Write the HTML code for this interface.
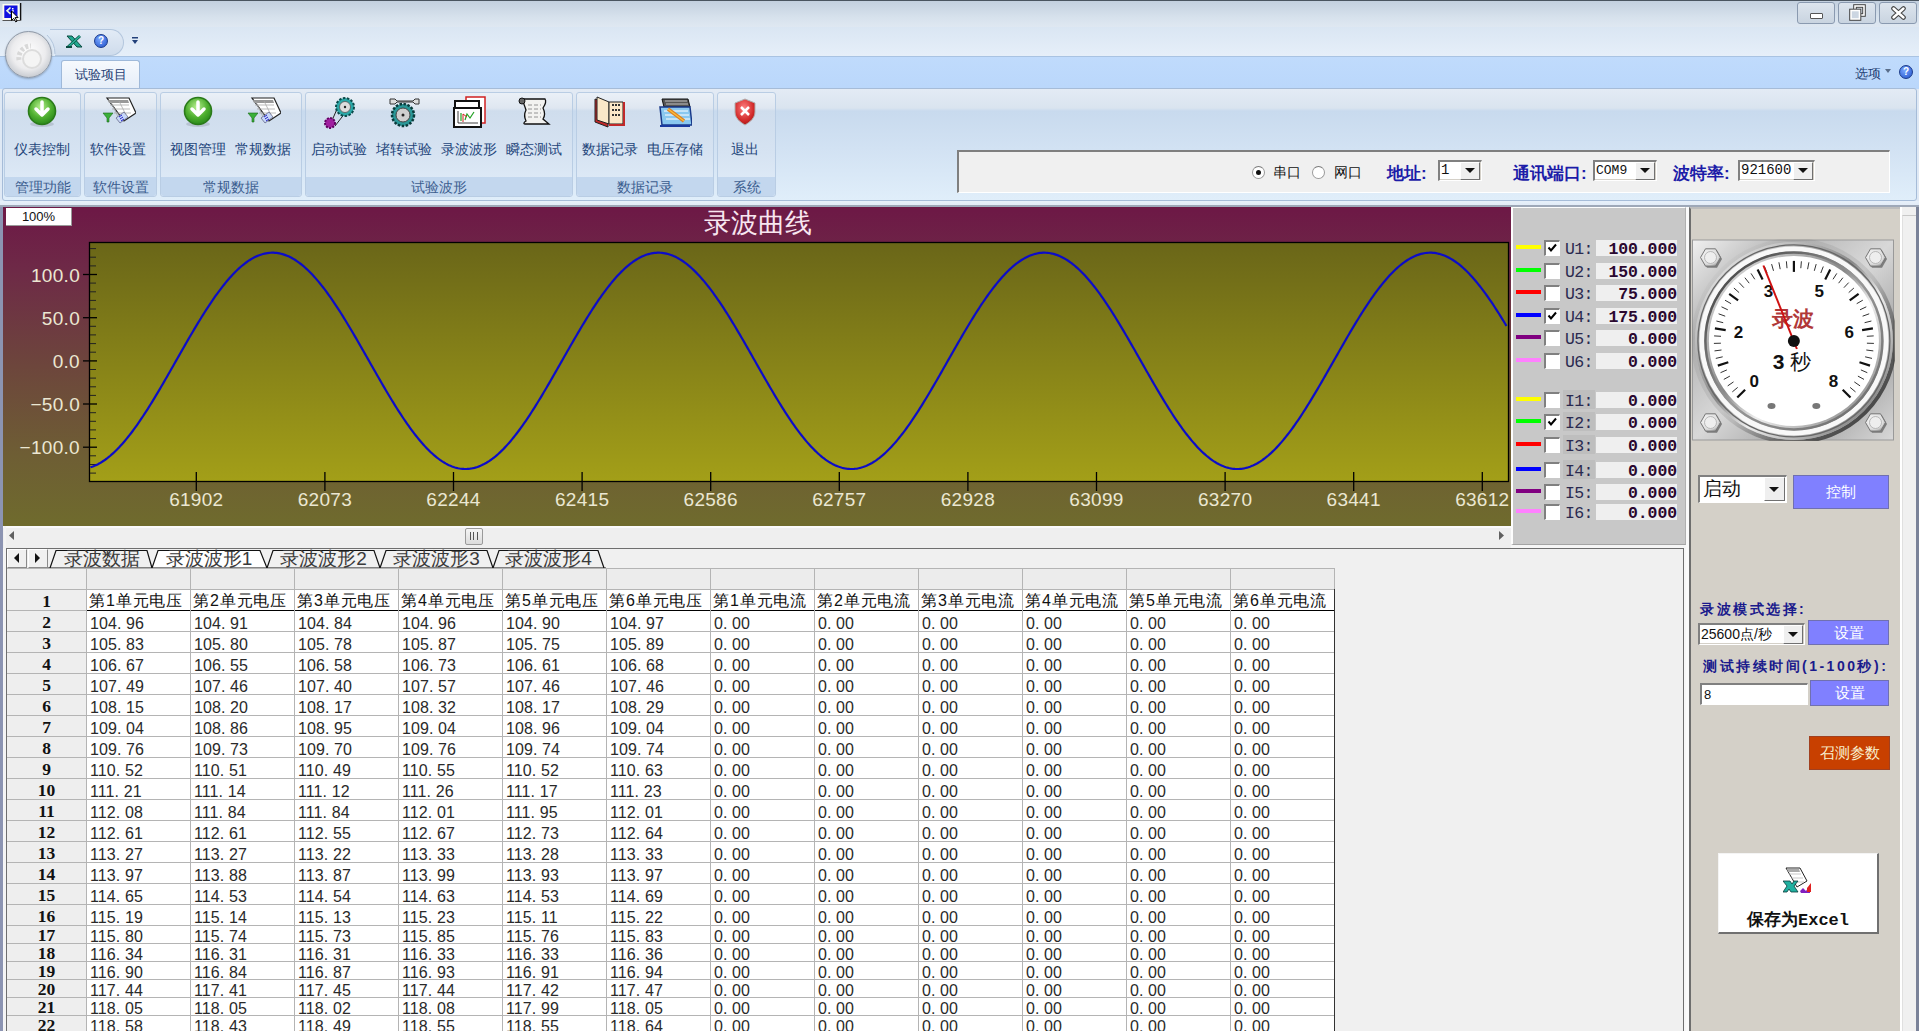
<!DOCTYPE html><html><head><meta charset="utf-8"><style>
*{box-sizing:border-box;margin:0;padding:0}
html,body{width:1919px;height:1031px;overflow:hidden;background:#dfe9f5;font-family:"Liberation Sans",sans-serif}
.ab{position:absolute}
.rl{position:absolute;font-size:14px;font-weight:500;color:#23457a;text-align:center;white-space:nowrap}
.gl{position:absolute;font-size:14px;color:#3b5d8f;text-align:center;white-space:nowrap}
.grp{position:absolute;top:92px;height:105px;border:1px solid #b9cde4;border-radius:3px;background:linear-gradient(#eaf0f7 0px,#dfe7f1 15px,#cfdded 18px,#d6e3f2 60px,#dde9f6 86px);}
.grp .band{position:absolute;left:0;right:0;bottom:0;height:19px;background:#c3d7ee;border-radius:0 0 3px 3px}
.cell{position:absolute;white-space:nowrap}
</style></head><body>

<div class="ab" style="left:0;top:0;width:1919px;height:27px;background:linear-gradient(#c3d0df,#d6e1ec 60%,#dfe8f2);border-top:1px solid #4a5560"></div>
<svg class="ab" style="left:0;top:0" width="26" height="26"><rect x="2.5" y="4" width="16.5" height="16.5" fill="#fbfbf0"/><rect x="4.3" y="5.5" width="13.2" height="12.5" fill="#1010e0"/><rect x="20" y="3" width="1.3" height="17.5" fill="#111"/><rect x="2.5" y="20" width="18" height="1" fill="#555"/><path d="M10.5 7.5L7 10.8l3.5 3" stroke="#e8f8e0" stroke-width="1.6" fill="none"/><rect x="12" y="8" width="1.5" height="1.5" fill="#fff"/><rect x="12" y="10.3" width="2" height="1.2" fill="#fff"/><path d="M11.5 11v9.5l2.2-2.2 2 3.6 1.4-.8-2-3.5h3z" fill="#fff" stroke="#000" stroke-width="1"/></svg>
<div class="ab" style="left:1797px;top:2px;width:38px;height:22px;border:1px solid #8a9ab0;border-radius:3px;background:linear-gradient(#dde5ee,#c9d4e0)"></div>
<div class="ab" style="left:1838px;top:2px;width:38px;height:22px;border:1px solid #8a9ab0;border-radius:3px;background:linear-gradient(#dde5ee,#c9d4e0)"></div>
<div class="ab" style="left:1879px;top:2px;width:38px;height:22px;border:1px solid #8a9ab0;border-radius:3px;background:linear-gradient(#dde5ee,#c9d4e0)"></div>
<div class="ab" style="left:1810px;top:13px;width:13px;height:6px;background:#fff;border:1px solid #555;border-radius:1px"></div>
<svg class="ab" style="left:1849px;top:4px" width="17" height="17"><rect x="6" y="2" width="9" height="9" fill="none" stroke="#444" stroke-width="3.6"/><rect x="6" y="2" width="9" height="9" fill="none" stroke="#fff" stroke-width="1.6"/><rect x="2" y="6.5" width="8.5" height="8.5" fill="#444" stroke="#444" stroke-width="3.6"/><rect x="2" y="6.5" width="8.5" height="8.5" fill="#ccd6e2" stroke="#fff" stroke-width="1.6"/></svg>
<svg class="ab" style="left:1891px;top:6px" width="15" height="14"><path d="M2.5 2.5L12.5 11.5M12.5 2.5L2.5 11.5" stroke="#444" stroke-width="4.6" stroke-linecap="round"/><path d="M2.5 2.5L12.5 11.5M12.5 2.5L2.5 11.5" stroke="#fff" stroke-width="2.4" stroke-linecap="round"/></svg>
<div class="ab" style="left:0;top:27px;width:1919px;height:29px;background:linear-gradient(#dae6f3,#e6eff9)"></div>
<div class="ab" style="left:50px;top:29px;width:74px;height:27px;border:1px solid #b3c6dd;border-left:none;border-radius:0 14px 14px 0;background:linear-gradient(#e2ebf6,#cfdcec)"></div>
<svg class="ab" style="left:0;top:27px" width="80" height="29"><defs><linearGradient id="qb" x1="0" y1="0" x2="0" y2="1"><stop offset="0" stop-color="#dae6f3"/><stop offset="1" stop-color="#e6eff9"/></linearGradient></defs><circle cx="28.5" cy="27" r="26.5" fill="url(#qb)"/><rect x="0" y="0" width="28" height="29" fill="url(#qb)"/><path d="M47 8A26.5 26.5 0 0 1 55 27" stroke="#b3c6dd" fill="none"/></svg>
<svg class="ab" style="left:64px;top:33px" width="20" height="17"><path d="M3 3h5l10 11h-5z" fill="#22a890" stroke="#0a4a40" stroke-width="1"/><path d="M16 3L4 14" stroke="#0a5a4a" stroke-width="3"/><path d="M16 3L4 14" stroke="#30b8a0" stroke-width="1.2"/><path d="M2 14h6" stroke="#0a4a40" stroke-width="2"/></svg>
<div class="ab" style="left:94px;top:34px;width:14px;height:14px;border-radius:50%;background:radial-gradient(circle at 40% 35%,#7aa8ff,#1f4fc8);border:1px solid #1a3a8a;color:#fff;font:bold 10px/12px 'Liberation Sans';text-align:center">?</div>
<svg class="ab" style="left:131px;top:36px" width="8" height="10"><rect x="1" y="1" width="6" height="1.5" fill="#22407a"/><path d="M1 4h6l-3 4z" fill="#22407a"/></svg>
<div class="ab" style="left:0;top:56px;width:1919px;height:33px;background:linear-gradient(#c0dbfc,#bad7fb)"></div>
<div class="ab" style="left:0;top:56px;width:1919px;height:1px;background:#a9c3e2"></div>
<div class="ab" style="left:61px;top:60px;width:79px;height:30px;border:1px solid #9fb9d9;border-bottom:none;border-radius:3px 3px 0 0;background:linear-gradient(#f6f9fd,#e4edf8)"></div>
<div class="ab" style="left:61px;top:66px;width:79px;text-align:center;font-size:13px;font-weight:500;color:#1f3f74">试验项目</div>
<div class="ab" style="left:5px;top:31px;width:47px;height:47px;border-radius:50%;background:radial-gradient(circle at 50% 45%,#ffffff,#ececee 50%,#c4c8ce 78%,#a4a8b0 90%,#cfd2d8 100%);border:1px solid #8e98a6;box-shadow:0 1px 2px rgba(0,0,0,.25)"></div>
<svg class="ab" style="left:13px;top:40px" width="30" height="30"><circle cx="19" cy="19" r="9" fill="#f4f4f4" stroke="#dcdcdc" stroke-width="2"/><path d="M6 20a12 12 0 0 1 12-14" stroke="#d8d8d8" stroke-width="5" fill="none" stroke-dasharray="3 2"/></svg>
<div class="ab" style="left:1855px;top:65px;font-size:13px;font-weight:500;color:#1f3f74">选项</div>
<svg class="ab" style="left:1885px;top:69px" width="6" height="4"><path d="M0 0h6l-3 4z" fill="#5a6e8a"/></svg>
<div class="ab" style="left:1899px;top:65px;width:14px;height:14px;border-radius:50%;background:radial-gradient(circle at 40% 35%,#7aa8ff,#1f4fc8);border:1px solid #1a3a8a;color:#fff;font:bold 10px/12px 'Liberation Sans';text-align:center">?</div>
<div class="ab" style="left:2px;top:88px;width:1915px;height:113px;border:1px solid #a6bcd8;border-radius:3px;background:linear-gradient(#e3ebf5 0px,#dae4ef 19px,#c8daee 22px,#d2e2f3 60px,#e0eefa 111px)"></div>
<div class="grp" style="left:4px;width:77px"><div class="band"></div><div class="gl" style="left:0;right:0;bottom:-1px">管理功能</div></div>
<div class="grp" style="left:84px;width:73px"><div class="band"></div><div class="gl" style="left:0;right:0;bottom:-1px">软件设置</div></div>
<div class="grp" style="left:160px;width:142px"><div class="band"></div><div class="gl" style="left:0;right:0;bottom:-1px">常规数据</div></div>
<div class="grp" style="left:305px;width:268px"><div class="band"></div><div class="gl" style="left:0;right:0;bottom:-1px">试验波形</div></div>
<div class="grp" style="left:576px;width:138px"><div class="band"></div><div class="gl" style="left:0;right:0;bottom:-1px">数据记录</div></div>
<div class="grp" style="left:717px;width:59px"><div class="band"></div><div class="gl" style="left:0;right:0;bottom:-1px">系统</div></div>
<svg width="0" height="0" style="position:absolute"><defs><radialGradient id="gg" cx="45%" cy="35%" r="65%"><stop offset="0" stop-color="#b8f090"/><stop offset=".6" stop-color="#50b030"/><stop offset="1" stop-color="#2a8a1a"/></radialGradient><radialGradient id="rg" cx="45%" cy="35%" r="70%"><stop offset="0" stop-color="#ff8080"/><stop offset=".7" stop-color="#d02828"/><stop offset="1" stop-color="#a01818"/></radialGradient></defs></svg>
<svg class="ab" style="left:26px;top:96px" width="32" height="32"><ellipse cx="16" cy="28" rx="12" ry="3" fill="rgba(0,0,0,.12)"/><circle cx="16" cy="15" r="13.5" fill="url(#gg)" stroke="#2a7a1a" stroke-width="1.6"/><path d="M16 6v13M10 13l6 6 6-6" stroke="#fff" stroke-width="3.5" fill="none" stroke-linecap="round" stroke-linejoin="round"/></svg>
<div class="rl" style="left:2px;width:80px;top:141px">仪表控制</div>
<svg class="ab" style="left:102px;top:96px" width="34" height="32"><path d="M5 2h22l7 15-12 8z" fill="#fff" stroke="#222" stroke-width="1.2"/><path d="M6 4h20l1 3H7z" fill="#999"/><path d="M8 9h19M10 13h18M12 17h17M9 6l8 17M17 5l7 14" stroke="#aaa" stroke-width="0.8"/><path d="M14 22l8-6 4 5-8 6z" fill="#c8d8f8" stroke="#446" stroke-width="0.6"/><path d="M17 21l3-2M18 23l3-2M19 25l3-2" stroke="#22c" stroke-width="1"/><path d="M1 17h10l-4 5v4h-2v-4z" fill="#3ab03a" stroke="#1a6a1a" stroke-width="0.6"/></svg>
<div class="rl" style="left:78px;width:80px;top:141px">软件设置</div>
<svg class="ab" style="left:182px;top:96px" width="32" height="32"><ellipse cx="16" cy="28" rx="12" ry="3" fill="rgba(0,0,0,.12)"/><circle cx="16" cy="15" r="13.5" fill="url(#gg)" stroke="#2a7a1a" stroke-width="1.6"/><path d="M16 6v13M10 13l6 6 6-6" stroke="#fff" stroke-width="3.5" fill="none" stroke-linecap="round" stroke-linejoin="round"/></svg>
<div class="rl" style="left:158px;width:80px;top:141px">视图管理</div>
<svg class="ab" style="left:247px;top:96px" width="34" height="32"><path d="M5 2h22l7 15-12 8z" fill="#fff" stroke="#222" stroke-width="1.2"/><path d="M6 4h20l1 3H7z" fill="#999"/><path d="M8 9h19M10 13h18M12 17h17M9 6l8 17M17 5l7 14" stroke="#aaa" stroke-width="0.8"/><path d="M14 22l8-6 4 5-8 6z" fill="#c8d8f8" stroke="#446" stroke-width="0.6"/><path d="M17 21l3-2M18 23l3-2M19 25l3-2" stroke="#22c" stroke-width="1"/><path d="M1 17h10l-4 5v4h-2v-4z" fill="#3ab03a" stroke="#1a6a1a" stroke-width="0.6"/></svg>
<div class="rl" style="left:223px;width:80px;top:141px">常规数据</div>
<svg class="ab" style="left:322px;top:96px" width="34" height="34"><path d="M8 29L19 4M13 30l14-18" stroke="#222" stroke-width="1"/><circle cx="23" cy="11" r="9" fill="#2aa8a8" stroke="#0a4a4a" stroke-width="2" stroke-dasharray="2.5 1.5"/><circle cx="23" cy="11" r="5.5" fill="#ddd" stroke="#555" stroke-width="0.8"/><circle cx="23" cy="11" r="1.2" fill="#222"/><circle cx="8" cy="27" r="5" fill="#a020a0" stroke="#600060" stroke-width="2" stroke-dasharray="2 1.3"/></svg>
<div class="rl" style="left:299px;width:80px;top:141px">启动试验</div>
<svg class="ab" style="left:387px;top:96px" width="34" height="34"><path d="M3 3h5l2 2h16l2-2h4v5h-4l-2-2H10l-2 2H3z" fill="#ddd" stroke="#333" stroke-width="1"/><circle cx="16" cy="19" r="11" fill="#2a9898" stroke="#0a3a3a" stroke-width="2.5" stroke-dasharray="2.5 1.5"/><circle cx="16" cy="19" r="7" fill="#cfcfcf" stroke="#444" stroke-width="1"/><circle cx="16" cy="19" r="1.5" fill="#222"/></svg>
<div class="rl" style="left:364px;width:80px;top:141px">堵转试验</div>
<svg class="ab" style="left:453px;top:96px" width="34" height="32"><rect x="13" y="1" width="19" height="26" fill="#fff" stroke="#d02020" stroke-width="1.5"/><rect x="2" y="5" width="24" height="10" fill="#fff" stroke="#111" stroke-width="2"/><rect x="1" y="12" width="27" height="19" fill="#fff" stroke="#111" stroke-width="2"/><path d="M5 27h20M5 15v12" stroke="#111" stroke-width="0.8"/><path d="M8 25v-8M12 24l2-6 3 4 4-6" stroke="#22a022" stroke-width="1.2" fill="none"/><path d="M10 26v-8l4 3" stroke="#d02020" stroke-width="1" fill="none"/></svg>
<div class="rl" style="left:429px;width:80px;top:141px">录波波形</div>
<svg class="ab" style="left:517px;top:96px" width="34" height="32"><path d="M6 3h22c2 3 0 6-2 9 2 4 2 8 0 11l6 5H8c-2 0-1-2 1-3-2-4-2-7 0-11-1-3-2-6-3-8z" fill="#f2f2f0" stroke="#111" stroke-width="1.3"/><circle cx="5" cy="5" r="3" fill="#666" stroke="#111" stroke-width="1"/><path d="M11 9h13M11 13h13M11 17h13M11 21h13" stroke="#888" stroke-width="0.9" stroke-dasharray="4 2"/></svg>
<div class="rl" style="left:494px;width:80px;top:141px">瞬态测试</div>
<svg class="ab" style="left:593px;top:95px" width="34" height="34"><path d="M2 4l13 4v24L2 27z" fill="#c02828" stroke="#222" stroke-width="1"/><path d="M4 2l12 5v22L4 25z" fill="#fbe8c8" stroke="#222" stroke-width="1"/><path d="M16 7h14v22H16z" fill="#fbe8c8" stroke="#222" stroke-width="1"/><path d="M30 7h2v24H16v-2h14z" fill="#c02828"/><path d="M19 10h8M19 15h8M19 20h8" stroke="#333" stroke-width="2" stroke-dasharray="2 1"/></svg>
<div class="rl" style="left:570px;width:80px;top:141px">数据记录</div>
<svg class="ab" style="left:658px;top:95px" width="34" height="34"><path d="M4 4h26l2 8H6z" fill="#555" stroke="#111" stroke-width="1"/><path d="M7 6h22M8 9h22" stroke="#ddd" stroke-width="0.8"/><path d="M2 12h30l2 18H4z" fill="#8ac8f0" stroke="#1a3a8a" stroke-width="1.5"/><path d="M6 16h24M7 20h24M8 24h24" stroke="#fff" stroke-width="1"/><path d="M10 14l16 12" stroke="#e08020" stroke-width="3.5"/><path d="M10 14l16 12" stroke="#f8c040" stroke-width="1.2"/><path d="M2 31h30" stroke="#1a3aa0" stroke-width="2"/></svg>
<div class="rl" style="left:635px;width:80px;top:141px">电压存储</div>
<svg class="ab" style="left:733px;top:98px" width="24" height="28"><path d="M12 1l10 4v9c0 6-5 10-10 13C7 24 2 20 2 14V5z" fill="url(#rg)" stroke="#b0b0b0" stroke-width="1"/><path d="M8 9l8 8M16 9l-8 8" stroke="#fff" stroke-width="2.5"/></svg>
<div class="rl" style="left:705px;width:80px;top:141px">退出</div>
<div class="ab" style="left:957px;top:150px;width:933px;height:43px;background:#f0f0f0;border-top:2px solid #7f7f7f;border-left:2px solid #7f7f7f;border-bottom:1px solid #fff;border-right:1px solid #fff"></div>
<div class="ab" style="left:1252px;top:166px;width:13px;height:13px;border-radius:50%;background:#fff;border:1px solid #9a9a9a;border-top-color:#7a7a7a"></div><div class="ab" style="left:1256px;top:170px;width:5px;height:5px;border-radius:50%;background:#111"></div>
<div class="ab" style="left:1273px;top:164px;font-size:14px;color:#111">串口</div>
<div class="ab" style="left:1312px;top:166px;width:13px;height:13px;border-radius:50%;background:#fff;border:1px solid #9a9a9a;border-top-color:#7a7a7a"></div>
<div class="ab" style="left:1334px;top:164px;font-size:14px;color:#111">网口</div>
<div class="ab" style="left:1387px;top:162px;font-size:17px;font-weight:bold;color:#1c1ca8;white-space:nowrap">地址:</div>
<div class="ab" style="left:1438px;top:160px;width:44px;height:21px;background:#fff;border-top:2px solid #808080;border-left:2px solid #808080;border-bottom:1px solid #fff;border-right:1px solid #fff;box-shadow:inset -1px -1px 0 #d4d0c8"></div><div class="ab" style="left:1441px;top:160px;height:21px;line-height:21px;font-size:14px;font-family:'Liberation Mono',monospace;color:#111;white-space:nowrap">1</div><div class="ab" style="left:1460px;top:162px;width:20px;height:18px;background:#efefef;border-right:1px solid #707070;border-bottom:1px solid #707070;border-top:1px solid #fff;border-left:1px solid #fff"></div><svg class="ab" style="left:1465px;top:168px" width="10" height="6"><path d="M0 0h10l-5 5z" fill="#111"/></svg>
<div class="ab" style="left:1513px;top:162px;font-size:17px;font-weight:bold;color:#1c1ca8;white-space:nowrap">通讯端口:</div>
<div class="ab" style="left:1593px;top:160px;width:64px;height:21px;background:#fff;border-top:2px solid #808080;border-left:2px solid #808080;border-bottom:1px solid #fff;border-right:1px solid #fff;box-shadow:inset -1px -1px 0 #d4d0c8"></div><div class="ab" style="left:1596px;top:160px;height:21px;line-height:21px;font-size:13px;font-family:'Liberation Mono',monospace;color:#111;white-space:nowrap">COM9</div><div class="ab" style="left:1635px;top:162px;width:20px;height:18px;background:#efefef;border-right:1px solid #707070;border-bottom:1px solid #707070;border-top:1px solid #fff;border-left:1px solid #fff"></div><svg class="ab" style="left:1640px;top:168px" width="10" height="6"><path d="M0 0h10l-5 5z" fill="#111"/></svg>
<div class="ab" style="left:1673px;top:162px;font-size:17px;font-weight:bold;color:#1c1ca8;white-space:nowrap">波特率:</div>
<div class="ab" style="left:1738px;top:160px;width:77px;height:21px;background:#fff;border-top:2px solid #808080;border-left:2px solid #808080;border-bottom:1px solid #fff;border-right:1px solid #fff;box-shadow:inset -1px -1px 0 #d4d0c8"></div><div class="ab" style="left:1741px;top:160px;height:21px;line-height:21px;font-size:14px;font-family:'Liberation Mono',monospace;color:#111;white-space:nowrap">921600</div><div class="ab" style="left:1793px;top:162px;width:20px;height:18px;background:#efefef;border-right:1px solid #707070;border-bottom:1px solid #707070;border-top:1px solid #fff;border-left:1px solid #fff"></div><svg class="ab" style="left:1798px;top:168px" width="10" height="6"><path d="M0 0h10l-5 5z" fill="#111"/></svg>
<div class="ab" style="left:0;top:201px;width:1919px;height:6px;background:linear-gradient(#e7f0fa,#dfe9f5)"></div>
<div class="ab" style="left:0;top:205px;width:1919px;height:2px;background:#9ea8b8"></div>
<div class="ab" style="left:0;top:207px;width:1919px;height:824px;background:#f6f6f6"></div>
<div class="ab" style="left:0;top:207px;width:3px;height:824px;background:#8c94b2"></div>
<div class="ab" style="left:3px;top:207px;width:1508px;height:319px;background:linear-gradient(#6d1846 0%,#6e2a47 20%,#6d463c 50%,#6e5e34 78%,#6f6b2d 100%)"></div>
<div class="ab" style="left:6px;top:208px;width:66px;height:18px;background:#fff;border-right:1px solid #999;border-bottom:1px solid #999;font-size:13px;line-height:18px;text-align:center;color:#111;font-family:'Liberation Sans',sans-serif">100%</div>
<div class="ab" style="left:658px;top:205px;width:200px;text-align:center;font-size:26.5px;color:#f8e6f0">录波曲线</div>
<svg class="ab" style="left:0;top:0" width="1919" height="1031"><defs><linearGradient id="pg" x1="0" y1="0" x2="0" y2="1"><stop offset="0" stop-color="#6a6618"/><stop offset="1" stop-color="#a39f18"/></linearGradient></defs><rect x="89.5" y="242.5" width="1419.0" height="239.0" fill="url(#pg)" stroke="#000" stroke-width="1.3"/><line x1="83" y1="274.5" x2="97" y2="274.5" stroke="#000" stroke-width="1.3"/><text x="80" y="281.5" text-anchor="end" font-family="Liberation Sans" font-size="19" letter-spacing="0.3" fill="#ebe7d2">100.0</text><line x1="83" y1="317.7" x2="97" y2="317.7" stroke="#000" stroke-width="1.3"/><text x="80" y="324.7" text-anchor="end" font-family="Liberation Sans" font-size="19" letter-spacing="0.3" fill="#ebe7d2">50.0</text><line x1="83" y1="360.9" x2="97" y2="360.9" stroke="#000" stroke-width="1.3"/><text x="80" y="367.9" text-anchor="end" font-family="Liberation Sans" font-size="19" letter-spacing="0.3" fill="#ebe7d2">0.0</text><line x1="83" y1="404.0" x2="97" y2="404.0" stroke="#000" stroke-width="1.3"/><text x="80" y="411.0" text-anchor="end" font-family="Liberation Sans" font-size="19" letter-spacing="0.3" fill="#ebe7d2">&#8722;50.0</text><line x1="83" y1="447.2" x2="97" y2="447.2" stroke="#000" stroke-width="1.3"/><text x="80" y="454.2" text-anchor="end" font-family="Liberation Sans" font-size="19" letter-spacing="0.3" fill="#ebe7d2">&#8722;100.0</text><line x1="90" y1="248.6" x2="96" y2="248.6" stroke="#222" stroke-width="1"/><line x1="90" y1="257.2" x2="96" y2="257.2" stroke="#222" stroke-width="1"/><line x1="90" y1="265.9" x2="96" y2="265.9" stroke="#222" stroke-width="1"/><line x1="90" y1="283.1" x2="96" y2="283.1" stroke="#222" stroke-width="1"/><line x1="90" y1="291.8" x2="96" y2="291.8" stroke="#222" stroke-width="1"/><line x1="90" y1="300.4" x2="96" y2="300.4" stroke="#222" stroke-width="1"/><line x1="90" y1="309.0" x2="96" y2="309.0" stroke="#222" stroke-width="1"/><line x1="90" y1="326.3" x2="96" y2="326.3" stroke="#222" stroke-width="1"/><line x1="90" y1="334.9" x2="96" y2="334.9" stroke="#222" stroke-width="1"/><line x1="90" y1="343.6" x2="96" y2="343.6" stroke="#222" stroke-width="1"/><line x1="90" y1="352.2" x2="96" y2="352.2" stroke="#222" stroke-width="1"/><line x1="90" y1="369.5" x2="96" y2="369.5" stroke="#222" stroke-width="1"/><line x1="90" y1="378.1" x2="96" y2="378.1" stroke="#222" stroke-width="1"/><line x1="90" y1="386.8" x2="96" y2="386.8" stroke="#222" stroke-width="1"/><line x1="90" y1="395.4" x2="96" y2="395.4" stroke="#222" stroke-width="1"/><line x1="90" y1="412.7" x2="96" y2="412.7" stroke="#222" stroke-width="1"/><line x1="90" y1="421.3" x2="96" y2="421.3" stroke="#222" stroke-width="1"/><line x1="90" y1="429.9" x2="96" y2="429.9" stroke="#222" stroke-width="1"/><line x1="90" y1="438.6" x2="96" y2="438.6" stroke="#222" stroke-width="1"/><line x1="90" y1="455.8" x2="96" y2="455.8" stroke="#222" stroke-width="1"/><line x1="90" y1="464.5" x2="96" y2="464.5" stroke="#222" stroke-width="1"/><line x1="90" y1="473.1" x2="96" y2="473.1" stroke="#222" stroke-width="1"/><line x1="196.3" y1="472" x2="196.3" y2="491" stroke="#000" stroke-width="1.3"/><text x="196.3" y="506" text-anchor="middle" font-family="Liberation Sans" font-size="19" letter-spacing="0.3" fill="#ebe7d2">61902</text><line x1="324.9" y1="472" x2="324.9" y2="491" stroke="#000" stroke-width="1.3"/><text x="324.9" y="506" text-anchor="middle" font-family="Liberation Sans" font-size="19" letter-spacing="0.3" fill="#ebe7d2">62073</text><line x1="453.5" y1="472" x2="453.5" y2="491" stroke="#000" stroke-width="1.3"/><text x="453.5" y="506" text-anchor="middle" font-family="Liberation Sans" font-size="19" letter-spacing="0.3" fill="#ebe7d2">62244</text><line x1="582.1" y1="472" x2="582.1" y2="491" stroke="#000" stroke-width="1.3"/><text x="582.1" y="506" text-anchor="middle" font-family="Liberation Sans" font-size="19" letter-spacing="0.3" fill="#ebe7d2">62415</text><line x1="710.7" y1="472" x2="710.7" y2="491" stroke="#000" stroke-width="1.3"/><text x="710.7" y="506" text-anchor="middle" font-family="Liberation Sans" font-size="19" letter-spacing="0.3" fill="#ebe7d2">62586</text><line x1="839.3" y1="472" x2="839.3" y2="491" stroke="#000" stroke-width="1.3"/><text x="839.3" y="506" text-anchor="middle" font-family="Liberation Sans" font-size="19" letter-spacing="0.3" fill="#ebe7d2">62757</text><line x1="967.9" y1="472" x2="967.9" y2="491" stroke="#000" stroke-width="1.3"/><text x="967.9" y="506" text-anchor="middle" font-family="Liberation Sans" font-size="19" letter-spacing="0.3" fill="#ebe7d2">62928</text><line x1="1096.5" y1="472" x2="1096.5" y2="491" stroke="#000" stroke-width="1.3"/><text x="1096.5" y="506" text-anchor="middle" font-family="Liberation Sans" font-size="19" letter-spacing="0.3" fill="#ebe7d2">63099</text><line x1="1225.1" y1="472" x2="1225.1" y2="491" stroke="#000" stroke-width="1.3"/><text x="1225.1" y="506" text-anchor="middle" font-family="Liberation Sans" font-size="19" letter-spacing="0.3" fill="#ebe7d2">63270</text><line x1="1353.7" y1="472" x2="1353.7" y2="491" stroke="#000" stroke-width="1.3"/><text x="1353.7" y="506" text-anchor="middle" font-family="Liberation Sans" font-size="19" letter-spacing="0.3" fill="#ebe7d2">63441</text><line x1="1482.3" y1="472" x2="1482.3" y2="491" stroke="#000" stroke-width="1.3"/><text x="1482.3" y="506" text-anchor="middle" font-family="Liberation Sans" font-size="19" letter-spacing="0.3" fill="#ebe7d2">63612</text><polyline points="90.5,467.29 92.0,466.79 93.5,466.22 95.0,465.60 96.5,464.91 98.0,464.16 99.5,463.34 101.0,462.47 102.5,461.54 104.0,460.54 105.5,459.49 107.0,458.38 108.5,457.21 110.0,455.98 111.5,454.69 113.0,453.35 114.5,451.96 116.0,450.51 117.5,449.00 119.0,447.45 120.5,445.84 122.0,444.18 123.5,442.47 125.0,440.71 126.5,438.91 128.0,437.06 129.5,435.16 131.0,433.22 132.5,431.24 134.0,429.21 135.5,427.14 137.0,425.04 138.5,422.89 140.0,420.71 141.5,418.49 143.0,416.24 144.5,413.96 146.0,411.64 147.5,409.29 149.0,406.92 150.5,404.51 152.0,402.08 153.5,399.63 155.0,397.15 156.5,394.66 158.0,392.14 159.5,389.60 161.0,387.04 162.5,384.47 164.0,381.89 165.5,379.29 167.0,376.68 168.5,374.07 170.0,371.44 171.5,368.81 173.0,366.17 174.5,363.54 176.0,360.89 177.5,358.25 179.0,355.61 180.5,352.98 182.0,350.35 183.5,347.72 185.0,345.10 186.5,342.49 188.0,339.90 189.5,337.31 191.0,334.74 192.5,332.19 194.0,329.65 195.5,327.13 197.0,324.63 198.5,322.15 200.0,319.70 201.5,317.27 203.0,314.86 204.5,312.49 206.0,310.14 207.5,307.82 209.0,305.53 210.5,303.28 212.0,301.06 213.5,298.88 215.0,296.73 216.5,294.63 218.0,292.56 219.5,290.53 221.0,288.54 222.5,286.60 224.0,284.70 225.5,282.85 227.0,281.04 228.5,279.29 230.0,277.58 231.5,275.92 233.0,274.31 234.5,272.75 236.0,271.24 237.5,269.79 239.0,268.39 240.5,267.05 242.0,265.76 243.5,264.53 245.0,263.36 246.5,262.25 248.0,261.19 249.5,260.20 251.0,259.26 252.5,258.38 254.0,257.57 255.5,256.82 257.0,256.13 258.5,255.50 260.0,254.93 261.5,254.43 263.0,253.99 264.5,253.62 266.0,253.31 267.5,253.06 269.0,252.88 270.5,252.76 272.0,252.70 273.5,252.71 275.0,252.79 276.5,252.93 278.0,253.13 279.5,253.40 281.0,253.73 282.5,254.13 284.0,254.59 285.5,255.11 287.0,255.70 288.5,256.35 290.0,257.06 291.5,257.83 293.0,258.67 294.5,259.56 296.0,260.52 297.5,261.54 299.0,262.61 300.5,263.75 302.0,264.94 303.5,266.19 305.0,267.49 306.5,268.85 308.0,270.27 309.5,271.74 311.0,273.26 312.5,274.84 314.0,276.46 315.5,278.14 317.0,279.87 318.5,281.64 320.0,283.46 321.5,285.33 323.0,287.24 324.5,289.20 326.0,291.20 327.5,293.24 329.0,295.32 330.5,297.44 332.0,299.60 333.5,301.80 335.0,304.03 336.5,306.29 338.0,308.59 339.5,310.92 341.0,313.27 342.5,315.66 344.0,318.07 345.5,320.51 347.0,322.97 348.5,325.46 350.0,327.97 351.5,330.49 353.0,333.04 354.5,335.60 356.0,338.17 357.5,340.76 359.0,343.36 360.5,345.97 362.0,348.59 363.5,351.22 365.0,353.86 366.5,356.49 368.0,359.13 369.5,361.77 371.0,364.42 372.5,367.05 374.0,369.69 375.5,372.32 377.0,374.94 378.5,377.56 380.0,380.16 381.5,382.75 383.0,385.33 384.5,387.90 386.0,390.45 387.5,392.98 389.0,395.49 390.5,397.98 392.0,400.45 393.5,402.90 395.0,405.32 396.5,407.71 398.0,410.08 399.5,412.42 401.0,414.72 402.5,417.00 404.0,419.24 405.5,421.44 407.0,423.61 408.5,425.74 410.0,427.84 411.5,429.89 413.0,431.90 414.5,433.87 416.0,435.80 417.5,437.68 419.0,439.52 420.5,441.31 422.0,443.05 423.5,444.74 425.0,446.38 426.5,447.97 428.0,449.51 429.5,451.00 431.0,452.43 432.5,453.81 434.0,455.13 435.5,456.39 437.0,457.60 438.5,458.75 440.0,459.85 441.5,460.88 443.0,461.86 444.5,462.77 446.0,463.62 447.5,464.41 449.0,465.14 450.5,465.81 452.0,466.42 453.5,466.96 455.0,467.44 456.5,467.85 458.0,468.21 459.5,468.49 461.0,468.72 462.5,468.88 464.0,468.97 465.5,469.00 467.0,468.97 468.5,468.87 470.0,468.70 471.5,468.48 473.0,468.18 474.5,467.83 476.0,467.41 477.5,466.93 479.0,466.38 480.5,465.77 482.0,465.10 483.5,464.36 485.0,463.57 486.5,462.71 488.0,461.79 489.5,460.81 491.0,459.78 492.5,458.68 494.0,457.52 495.5,456.31 497.0,455.04 498.5,453.72 500.0,452.33 501.5,450.90 503.0,449.41 504.5,447.87 506.0,446.27 507.5,444.63 509.0,442.93 510.5,441.19 512.0,439.40 513.5,437.56 515.0,435.67 516.5,433.74 518.0,431.77 519.5,429.75 521.0,427.70 522.5,425.60 524.0,423.47 525.5,421.30 527.0,419.09 528.5,416.84 530.0,414.57 531.5,412.26 533.0,409.92 534.5,407.55 536.0,405.16 537.5,402.73 539.0,400.29 540.5,397.82 542.0,395.32 543.5,392.81 545.0,390.28 546.5,387.73 548.0,385.16 549.5,382.58 551.0,379.99 552.5,377.38 554.0,374.77 555.5,372.14 557.0,369.51 558.5,366.88 560.0,364.24 561.5,361.60 563.0,358.96 564.5,356.32 566.0,353.68 567.5,351.05 569.0,348.42 570.5,345.80 572.0,343.19 573.5,340.59 575.0,338.00 576.5,335.43 578.0,332.87 579.5,330.32 581.0,327.80 582.5,325.29 584.0,322.81 585.5,320.35 587.0,317.91 588.5,315.50 590.0,313.12 591.5,310.76 593.0,308.44 594.5,306.14 596.0,303.88 597.5,301.65 599.0,299.46 600.5,297.30 602.0,295.18 603.5,293.11 605.0,291.07 606.5,289.07 608.0,287.12 609.5,285.21 611.0,283.34 612.5,281.52 614.0,279.75 615.5,278.03 617.0,276.35 618.5,274.73 620.0,273.16 621.5,271.64 623.0,270.17 624.5,268.76 626.0,267.40 627.5,266.10 629.0,264.86 630.5,263.67 632.0,262.54 633.5,261.47 635.0,260.45 636.5,259.50 638.0,258.61 639.5,257.78 641.0,257.01 642.5,256.30 644.0,255.66 645.5,255.08 647.0,254.56 648.5,254.10 650.0,253.71 651.5,253.38 653.0,253.12 654.5,252.92 656.0,252.78 657.5,252.71 659.0,252.71 660.5,252.76 662.0,252.89 663.5,253.07 665.0,253.32 666.5,253.64 668.0,254.02 669.5,254.46 671.0,254.97 672.5,255.54 674.0,256.17 675.5,256.86 677.0,257.62 678.5,258.44 680.0,259.32 681.5,260.26 683.0,261.26 684.5,262.32 686.0,263.44 687.5,264.61 689.0,265.85 690.5,267.14 692.0,268.48 693.5,269.89 695.0,271.34 696.5,272.85 698.0,274.41 699.5,276.03 701.0,277.69 702.5,279.40 704.0,281.16 705.5,282.97 707.0,284.83 708.5,286.73 710.0,288.68 711.5,290.66 713.0,292.69 714.5,294.77 716.0,296.88 717.5,299.02 719.0,301.21 720.5,303.43 722.0,305.69 723.5,307.97 725.0,310.29 726.5,312.64 728.0,315.02 729.5,317.43 731.0,319.86 732.5,322.32 734.0,324.80 735.5,327.30 737.0,329.82 738.5,332.36 740.0,334.91 741.5,337.48 743.0,340.07 744.5,342.67 746.0,345.28 747.5,347.89 749.0,350.52 750.5,353.15 752.0,355.79 753.5,358.43 755.0,361.07 756.5,363.71 758.0,366.35 759.5,368.99 761.0,371.62 762.5,374.24 764.0,376.86 765.5,379.47 767.0,382.06 768.5,384.65 770.0,387.22 771.5,389.77 773.0,392.30 774.5,394.82 776.0,397.32 777.5,399.80 779.0,402.25 780.5,404.67 782.0,407.08 783.5,409.45 785.0,411.80 786.5,414.11 788.0,416.39 789.5,418.64 791.0,420.86 792.5,423.04 794.0,425.18 795.5,427.28 797.0,429.35 798.5,431.37 800.0,433.35 801.5,435.29 803.0,437.18 804.5,439.03 806.0,440.83 807.5,442.59 809.0,444.29 810.5,445.95 812.0,447.55 813.5,449.10 815.0,450.60 816.5,452.05 818.0,453.44 819.5,454.78 821.0,456.06 822.5,457.29 824.0,458.45 825.5,459.56 827.0,460.61 828.5,461.60 830.0,462.53 831.5,463.40 833.0,464.21 834.5,464.96 836.0,465.64 837.5,466.26 839.0,466.82 840.5,467.32 842.0,467.75 843.5,468.12 845.0,468.42 846.5,468.66 848.0,468.84 849.5,468.95 851.0,469.00 852.5,468.98 854.0,468.90 855.5,468.75 857.0,468.54 858.5,468.27 860.0,467.93 861.5,467.53 863.0,467.06 864.5,466.53 866.0,465.94 867.5,465.28 869.0,464.56 870.5,463.79 872.0,462.94 873.5,462.04 875.0,461.08 876.5,460.06 878.0,458.98 879.5,457.84 881.0,456.64 882.5,455.39 884.0,454.07 885.5,452.71 887.0,451.29 888.5,449.81 890.0,448.28 891.5,446.70 893.0,445.07 894.5,443.39 896.0,441.66 897.5,439.88 899.0,438.05 900.5,436.18 902.0,434.26 903.5,432.30 905.0,430.30 906.5,428.25 908.0,426.17 909.5,424.04 911.0,421.88 912.5,419.68 914.0,417.45 915.5,415.18 917.0,412.88 918.5,410.55 920.0,408.19 921.5,405.80 923.0,403.38 924.5,400.94 926.0,398.48 927.5,395.99 929.0,393.48 930.5,390.95 932.0,388.41 933.5,385.85 935.0,383.27 936.5,380.68 938.0,378.08 939.5,375.46 941.0,372.84 942.5,370.21 944.0,367.58 945.5,364.94 947.0,362.30 948.5,359.66 950.0,357.02 951.5,354.38 953.0,351.75 954.5,349.12 956.0,346.50 957.5,343.88 959.0,341.28 960.5,338.69 962.0,336.11 963.5,333.55 965.0,331.00 966.5,328.47 968.0,325.96 969.5,323.47 971.0,321.00 972.5,318.56 974.0,316.14 975.5,313.75 977.0,311.39 978.5,309.05 980.0,306.75 981.5,304.48 983.0,302.24 984.5,300.04 986.0,297.87 987.5,295.75 989.0,293.66 990.5,291.61 992.0,289.60 993.5,287.63 995.0,285.71 996.5,283.83 998.0,282.00 999.5,280.22 1001.0,278.48 1002.5,276.80 1004.0,275.16 1005.5,273.57 1007.0,272.04 1008.5,270.56 1010.0,269.13 1011.5,267.76 1013.0,266.44 1014.5,265.18 1016.0,263.98 1017.5,262.83 1019.0,261.75 1020.5,260.72 1022.0,259.75 1023.5,258.84 1025.0,258.00 1026.5,257.21 1028.0,256.49 1029.5,255.82 1031.0,255.23 1032.5,254.69 1034.0,254.22 1035.5,253.81 1037.0,253.46 1038.5,253.18 1040.0,252.96 1041.5,252.81 1043.0,252.72 1044.5,252.70 1046.0,252.74 1047.5,252.85 1049.0,253.02 1050.5,253.25 1052.0,253.55 1053.5,253.91 1055.0,254.34 1056.5,254.83 1058.0,255.38 1059.5,256.00 1061.0,256.67 1062.5,257.41 1064.0,258.22 1065.5,259.08 1067.0,260.00 1068.5,260.99 1070.0,262.03 1071.5,263.13 1073.0,264.29 1074.5,265.51 1076.0,266.79 1077.5,268.12 1079.0,269.51 1080.5,270.95 1082.0,272.44 1083.5,273.99 1085.0,275.59 1086.5,277.24 1088.0,278.94 1089.5,280.69 1091.0,282.49 1092.5,284.33 1094.0,286.22 1095.5,288.15 1097.0,290.13 1098.5,292.15 1100.0,294.21 1101.5,296.31 1103.0,298.45 1104.5,300.62 1106.0,302.83 1107.5,305.08 1109.0,307.36 1110.5,309.67 1112.0,312.01 1113.5,314.38 1115.0,316.78 1116.5,319.21 1118.0,321.66 1119.5,324.13 1121.0,326.63 1122.5,329.14 1124.0,331.68 1125.5,334.23 1127.0,336.80 1128.5,339.38 1130.0,341.97 1131.5,344.58 1133.0,347.20 1134.5,349.82 1136.0,352.45 1137.5,355.09 1139.0,357.72 1140.5,360.37 1142.0,363.01 1143.5,365.65 1145.0,368.28 1146.5,370.92 1148.0,373.54 1149.5,376.16 1151.0,378.77 1152.5,381.37 1154.0,383.96 1155.5,386.53 1157.0,389.09 1158.5,391.63 1160.0,394.15 1161.5,396.66 1163.0,399.14 1164.5,401.60 1166.0,404.03 1167.5,406.44 1169.0,408.82 1170.5,411.17 1172.0,413.50 1173.5,415.79 1175.0,418.05 1176.5,420.27 1178.0,422.46 1179.5,424.61 1181.0,426.73 1182.5,428.80 1184.0,430.83 1185.5,432.83 1187.0,434.78 1188.5,436.68 1190.0,438.54 1191.5,440.36 1193.0,442.12 1194.5,443.84 1196.0,445.51 1197.5,447.13 1199.0,448.70 1200.5,450.21 1202.0,451.67 1203.5,453.08 1205.0,454.43 1206.5,455.73 1208.0,456.97 1209.5,458.15 1211.0,459.27 1212.5,460.34 1214.0,461.34 1215.5,462.29 1217.0,463.17 1218.5,464.00 1220.0,464.76 1221.5,465.46 1223.0,466.10 1224.5,466.68 1226.0,467.19 1227.5,467.64 1229.0,468.03 1230.5,468.35 1232.0,468.61 1233.5,468.80 1235.0,468.93 1236.5,468.99 1238.0,468.99 1239.5,468.93 1241.0,468.80 1242.5,468.61 1244.0,468.35 1245.5,468.03 1247.0,467.64 1248.5,467.19 1250.0,466.68 1251.5,466.10 1253.0,465.46 1254.5,464.76 1256.0,464.00 1257.5,463.17 1259.0,462.29 1260.5,461.34 1262.0,460.34 1263.5,459.27 1265.0,458.15 1266.5,456.97 1268.0,455.73 1269.5,454.43 1271.0,453.08 1272.5,451.67 1274.0,450.21 1275.5,448.70 1277.0,447.13 1278.5,445.51 1280.0,443.84 1281.5,442.12 1283.0,440.36 1284.5,438.54 1286.0,436.68 1287.5,434.78 1289.0,432.83 1290.5,430.83 1292.0,428.80 1293.5,426.73 1295.0,424.61 1296.5,422.46 1298.0,420.27 1299.5,418.05 1301.0,415.79 1302.5,413.50 1304.0,411.17 1305.5,408.82 1307.0,406.44 1308.5,404.03 1310.0,401.60 1311.5,399.14 1313.0,396.66 1314.5,394.15 1316.0,391.63 1317.5,389.09 1319.0,386.53 1320.5,383.96 1322.0,381.37 1323.5,378.77 1325.0,376.16 1326.5,373.54 1328.0,370.92 1329.5,368.28 1331.0,365.65 1332.5,363.01 1334.0,360.37 1335.5,357.72 1337.0,355.09 1338.5,352.45 1340.0,349.82 1341.5,347.20 1343.0,344.58 1344.5,341.97 1346.0,339.38 1347.5,336.80 1349.0,334.23 1350.5,331.68 1352.0,329.14 1353.5,326.63 1355.0,324.13 1356.5,321.66 1358.0,319.21 1359.5,316.78 1361.0,314.38 1362.5,312.01 1364.0,309.67 1365.5,307.36 1367.0,305.08 1368.5,302.83 1370.0,300.62 1371.5,298.45 1373.0,296.31 1374.5,294.21 1376.0,292.15 1377.5,290.13 1379.0,288.15 1380.5,286.22 1382.0,284.33 1383.5,282.49 1385.0,280.69 1386.5,278.94 1388.0,277.24 1389.5,275.59 1391.0,273.99 1392.5,272.44 1394.0,270.95 1395.5,269.51 1397.0,268.12 1398.5,266.79 1400.0,265.51 1401.5,264.29 1403.0,263.13 1404.5,262.03 1406.0,260.99 1407.5,260.00 1409.0,259.08 1410.5,258.22 1412.0,257.41 1413.5,256.67 1415.0,256.00 1416.5,255.38 1418.0,254.83 1419.5,254.34 1421.0,253.91 1422.5,253.55 1424.0,253.25 1425.5,253.02 1427.0,252.85 1428.5,252.74 1430.0,252.70 1431.5,252.72 1433.0,252.81 1434.5,252.96 1436.0,253.18 1437.5,253.46 1439.0,253.81 1440.5,254.22 1442.0,254.69 1443.5,255.23 1445.0,255.82 1446.5,256.49 1448.0,257.21 1449.5,258.00 1451.0,258.84 1452.5,259.75 1454.0,260.72 1455.5,261.75 1457.0,262.83 1458.5,263.98 1460.0,265.18 1461.5,266.44 1463.0,267.76 1464.5,269.13 1466.0,270.56 1467.5,272.04 1469.0,273.57 1470.5,275.16 1472.0,276.80 1473.5,278.48 1475.0,280.22 1476.5,282.00 1478.0,283.83 1479.5,285.71 1481.0,287.63 1482.5,289.60 1484.0,291.61 1485.5,293.66 1487.0,295.75 1488.5,297.87 1490.0,300.04 1491.5,302.24 1493.0,304.48 1494.5,306.75 1496.0,309.05 1497.5,311.39 1499.0,313.75 1500.5,316.14 1502.0,318.56 1503.5,321.00 1505.0,323.47 1506.5,325.96" fill="none" stroke="#0c0cc8" stroke-width="2.2"/></svg>
<div class="ab" style="left:1511px;top:207px;width:175px;height:338px;background:#c8c8c8;border-left:2px solid #fdfdfd;border-top:1px solid #fdfdfd;border-bottom:1px solid #a4a4a4;border-right:1px solid #b0b0b0"></div>
<div class="ab" style="left:1516px;top:245px;width:25px;height:4px;background:#ffff00"></div>
<div class="ab" style="left:1544px;top:240px;width:16px;height:16px;background:#fff;border-top:2px solid #808080;border-left:2px solid #808080;border-right:1px solid #fff;border-bottom:1px solid #fff"></div>
<svg class="ab" style="left:1547px;top:243px" width="10" height="10"><path d="M1.5 4.5l2.5 3 5-6" stroke="#000" stroke-width="2" fill="none"/></svg>
<div class="ab" style="left:1565px;top:240px;font-family:'Liberation Mono',monospace;font-size:16.5px;color:#2a2a50;white-space:nowrap;letter-spacing:-0.6px">U1:</div>
<div class="ab" style="left:1596px;top:240px;width:81px;height:16px;background:#efefef"></div>
<div class="ab" style="left:1560px;top:240px;width:117px;text-align:right;font-family:'Liberation Mono',monospace;font-weight:bold;font-size:16.5px;color:#2a0830;letter-spacing:-0.1px;white-space:nowrap">100.000</div>
<div class="ab" style="left:1516px;top:268px;width:25px;height:4px;background:#00ff00"></div>
<div class="ab" style="left:1544px;top:263px;width:16px;height:16px;background:#fff;border-top:2px solid #808080;border-left:2px solid #808080;border-right:1px solid #fff;border-bottom:1px solid #fff"></div>
<div class="ab" style="left:1565px;top:263px;font-family:'Liberation Mono',monospace;font-size:16.5px;color:#2a2a50;white-space:nowrap;letter-spacing:-0.6px">U2:</div>
<div class="ab" style="left:1596px;top:263px;width:81px;height:16px;background:#efefef"></div>
<div class="ab" style="left:1560px;top:263px;width:117px;text-align:right;font-family:'Liberation Mono',monospace;font-weight:bold;font-size:16.5px;color:#2a0830;letter-spacing:-0.1px;white-space:nowrap">150.000</div>
<div class="ab" style="left:1516px;top:290px;width:25px;height:4px;background:#ff0000"></div>
<div class="ab" style="left:1544px;top:285px;width:16px;height:16px;background:#fff;border-top:2px solid #808080;border-left:2px solid #808080;border-right:1px solid #fff;border-bottom:1px solid #fff"></div>
<div class="ab" style="left:1565px;top:285px;font-family:'Liberation Mono',monospace;font-size:16.5px;color:#2a2a50;white-space:nowrap;letter-spacing:-0.6px">U3:</div>
<div class="ab" style="left:1596px;top:285px;width:81px;height:16px;background:#efefef"></div>
<div class="ab" style="left:1560px;top:285px;width:117px;text-align:right;font-family:'Liberation Mono',monospace;font-weight:bold;font-size:16.5px;color:#2a0830;letter-spacing:-0.1px;white-space:nowrap">75.000</div>
<div class="ab" style="left:1516px;top:313px;width:25px;height:4px;background:#0000ff"></div>
<div class="ab" style="left:1544px;top:308px;width:16px;height:16px;background:#fff;border-top:2px solid #808080;border-left:2px solid #808080;border-right:1px solid #fff;border-bottom:1px solid #fff"></div>
<svg class="ab" style="left:1547px;top:311px" width="10" height="10"><path d="M1.5 4.5l2.5 3 5-6" stroke="#000" stroke-width="2" fill="none"/></svg>
<div class="ab" style="left:1565px;top:308px;font-family:'Liberation Mono',monospace;font-size:16.5px;color:#2a2a50;white-space:nowrap;letter-spacing:-0.6px">U4:</div>
<div class="ab" style="left:1596px;top:308px;width:81px;height:16px;background:#efefef"></div>
<div class="ab" style="left:1560px;top:308px;width:117px;text-align:right;font-family:'Liberation Mono',monospace;font-weight:bold;font-size:16.5px;color:#2a0830;letter-spacing:-0.1px;white-space:nowrap">175.000</div>
<div class="ab" style="left:1516px;top:335px;width:25px;height:4px;background:#800080"></div>
<div class="ab" style="left:1544px;top:330px;width:16px;height:16px;background:#fff;border-top:2px solid #808080;border-left:2px solid #808080;border-right:1px solid #fff;border-bottom:1px solid #fff"></div>
<div class="ab" style="left:1565px;top:330px;font-family:'Liberation Mono',monospace;font-size:16.5px;color:#2a2a50;white-space:nowrap;letter-spacing:-0.6px">U5:</div>
<div class="ab" style="left:1596px;top:330px;width:81px;height:16px;background:#efefef"></div>
<div class="ab" style="left:1560px;top:330px;width:117px;text-align:right;font-family:'Liberation Mono',monospace;font-weight:bold;font-size:16.5px;color:#2a0830;letter-spacing:-0.1px;white-space:nowrap">0.000</div>
<div class="ab" style="left:1516px;top:358px;width:25px;height:4px;background:#ff80ff"></div>
<div class="ab" style="left:1544px;top:353px;width:16px;height:16px;background:#fff;border-top:2px solid #808080;border-left:2px solid #808080;border-right:1px solid #fff;border-bottom:1px solid #fff"></div>
<div class="ab" style="left:1565px;top:353px;font-family:'Liberation Mono',monospace;font-size:16.5px;color:#2a2a50;white-space:nowrap;letter-spacing:-0.6px">U6:</div>
<div class="ab" style="left:1596px;top:353px;width:81px;height:16px;background:#efefef"></div>
<div class="ab" style="left:1560px;top:353px;width:117px;text-align:right;font-family:'Liberation Mono',monospace;font-weight:bold;font-size:16.5px;color:#2a0830;letter-spacing:-0.1px;white-space:nowrap">0.000</div>
<div class="ab" style="left:1516px;top:397px;width:25px;height:4px;background:#ffff00"></div>
<div class="ab" style="left:1544px;top:392px;width:16px;height:16px;background:#fff;border-top:2px solid #808080;border-left:2px solid #808080;border-right:1px solid #fff;border-bottom:1px solid #fff"></div>
<div class="ab" style="left:1563px;top:390px;width:32px;height:19px;background:#bebebe"></div>
<div class="ab" style="left:1565px;top:392px;font-family:'Liberation Mono',monospace;font-size:16.5px;color:#2a2a50;white-space:nowrap;letter-spacing:-0.6px">I1:</div>
<div class="ab" style="left:1596px;top:392px;width:81px;height:16px;background:#efefef"></div>
<div class="ab" style="left:1560px;top:392px;width:117px;text-align:right;font-family:'Liberation Mono',monospace;font-weight:bold;font-size:16.5px;color:#2a0830;letter-spacing:-0.1px;white-space:nowrap">0.000</div>
<div class="ab" style="left:1516px;top:419px;width:25px;height:4px;background:#00ff00"></div>
<div class="ab" style="left:1544px;top:414px;width:16px;height:16px;background:#fff;border-top:2px solid #808080;border-left:2px solid #808080;border-right:1px solid #fff;border-bottom:1px solid #fff"></div>
<svg class="ab" style="left:1547px;top:417px" width="10" height="10"><path d="M1.5 4.5l2.5 3 5-6" stroke="#000" stroke-width="2" fill="none"/></svg>
<div class="ab" style="left:1563px;top:412px;width:32px;height:19px;background:#bebebe"></div>
<div class="ab" style="left:1565px;top:414px;font-family:'Liberation Mono',monospace;font-size:16.5px;color:#2a2a50;white-space:nowrap;letter-spacing:-0.6px">I2:</div>
<div class="ab" style="left:1596px;top:414px;width:81px;height:16px;background:#efefef"></div>
<div class="ab" style="left:1560px;top:414px;width:117px;text-align:right;font-family:'Liberation Mono',monospace;font-weight:bold;font-size:16.5px;color:#2a0830;letter-spacing:-0.1px;white-space:nowrap">0.000</div>
<div class="ab" style="left:1516px;top:442px;width:25px;height:4px;background:#ff0000"></div>
<div class="ab" style="left:1544px;top:437px;width:16px;height:16px;background:#fff;border-top:2px solid #808080;border-left:2px solid #808080;border-right:1px solid #fff;border-bottom:1px solid #fff"></div>
<div class="ab" style="left:1563px;top:435px;width:32px;height:19px;background:#bebebe"></div>
<div class="ab" style="left:1565px;top:437px;font-family:'Liberation Mono',monospace;font-size:16.5px;color:#2a2a50;white-space:nowrap;letter-spacing:-0.6px">I3:</div>
<div class="ab" style="left:1596px;top:437px;width:81px;height:16px;background:#efefef"></div>
<div class="ab" style="left:1560px;top:437px;width:117px;text-align:right;font-family:'Liberation Mono',monospace;font-weight:bold;font-size:16.5px;color:#2a0830;letter-spacing:-0.1px;white-space:nowrap">0.000</div>
<div class="ab" style="left:1516px;top:467px;width:25px;height:4px;background:#0000ff"></div>
<div class="ab" style="left:1544px;top:462px;width:16px;height:16px;background:#fff;border-top:2px solid #808080;border-left:2px solid #808080;border-right:1px solid #fff;border-bottom:1px solid #fff"></div>
<div class="ab" style="left:1563px;top:460px;width:32px;height:19px;background:#bebebe"></div>
<div class="ab" style="left:1565px;top:462px;font-family:'Liberation Mono',monospace;font-size:16.5px;color:#2a2a50;white-space:nowrap;letter-spacing:-0.6px">I4:</div>
<div class="ab" style="left:1596px;top:462px;width:81px;height:16px;background:#efefef"></div>
<div class="ab" style="left:1560px;top:462px;width:117px;text-align:right;font-family:'Liberation Mono',monospace;font-weight:bold;font-size:16.5px;color:#2a0830;letter-spacing:-0.1px;white-space:nowrap">0.000</div>
<div class="ab" style="left:1516px;top:489px;width:25px;height:4px;background:#800080"></div>
<div class="ab" style="left:1544px;top:484px;width:16px;height:16px;background:#fff;border-top:2px solid #808080;border-left:2px solid #808080;border-right:1px solid #fff;border-bottom:1px solid #fff"></div>
<div class="ab" style="left:1565px;top:484px;font-family:'Liberation Mono',monospace;font-size:16.5px;color:#2a2a50;white-space:nowrap;letter-spacing:-0.6px">I5:</div>
<div class="ab" style="left:1596px;top:484px;width:81px;height:16px;background:#efefef"></div>
<div class="ab" style="left:1560px;top:484px;width:117px;text-align:right;font-family:'Liberation Mono',monospace;font-weight:bold;font-size:16.5px;color:#2a0830;letter-spacing:-0.1px;white-space:nowrap">0.000</div>
<div class="ab" style="left:1516px;top:509px;width:25px;height:4px;background:#ff80ff"></div>
<div class="ab" style="left:1544px;top:504px;width:16px;height:16px;background:#fff;border-top:2px solid #808080;border-left:2px solid #808080;border-right:1px solid #fff;border-bottom:1px solid #fff"></div>
<div class="ab" style="left:1565px;top:504px;font-family:'Liberation Mono',monospace;font-size:16.5px;color:#2a2a50;white-space:nowrap;letter-spacing:-0.6px">I6:</div>
<div class="ab" style="left:1596px;top:504px;width:81px;height:16px;background:#efefef"></div>
<div class="ab" style="left:1560px;top:504px;width:117px;text-align:right;font-family:'Liberation Mono',monospace;font-weight:bold;font-size:16.5px;color:#2a0830;letter-spacing:-0.1px;white-space:nowrap">0.000</div>
<div class="ab" style="left:1686px;top:207px;width:3px;height:824px;background:#fafafa"></div>
<div class="ab" style="left:1689px;top:207px;width:211px;height:824px;background:#d4d0c8;border-left:2px solid #6e6e6e;border-top:2px solid #bdbdbd"></div>
<div class="ab" style="left:1900px;top:207px;width:19px;height:824px;background:#f0f0f0;border-left:2px solid #fff"></div>
<div class="ab" style="left:1902px;top:215px;width:15px;height:816px;border-top:1px solid #c8c8c8;border-left:1px solid #e0e0e0"></div>
<div class="ab" style="left:1916px;top:207px;width:3px;height:824px;background:#7a8298"></div>
<svg class="ab" style="left:1692px;top:239px" width="203" height="202"><defs><linearGradient id="plate" x1="0" y1="0" x2="1" y2="1"><stop offset="0" stop-color="#f0f0f0"/><stop offset=".25" stop-color="#b4b4b4"/><stop offset=".5" stop-color="#d8d8d8"/><stop offset=".75" stop-color="#a4a4a4"/><stop offset="1" stop-color="#d8d8d8"/></linearGradient><linearGradient id="ring" x1="0" y1="0" x2="1" y2="1"><stop offset="0" stop-color="#fff"/><stop offset=".45" stop-color="#888"/><stop offset=".6" stop-color="#eee"/><stop offset="1" stop-color="#555"/></linearGradient><linearGradient id="sh2" x1="0" y1="0" x2="1" y2="1"><stop offset="0" stop-color="#000" stop-opacity="0"/><stop offset=".55" stop-color="#000" stop-opacity="0.1"/><stop offset="1" stop-color="#111" stop-opacity="0.9"/></linearGradient><linearGradient id="shad" x1="0" y1="0" x2="1" y2="1"><stop offset="0" stop-color="#333"/><stop offset=".5" stop-color="#999"/><stop offset="1" stop-color="#666"/></linearGradient><radialGradient id="bolt" cx="40%" cy="40%" r="70%"><stop offset="0" stop-color="#fff"/><stop offset=".7" stop-color="#ddd"/><stop offset="1" stop-color="#888"/></radialGradient></defs><rect x="0.5" y="1" width="201" height="200" fill="url(#plate)" stroke="#999" stroke-width="1"/><circle cx="101.90000000000009" cy="101.89999999999998" r="101" fill="none" stroke="url(#sh2)" stroke-width="4"/><circle cx="101.90000000000009" cy="101.89999999999998" r="99" fill="url(#ring)"/><circle cx="101.90000000000009" cy="101.89999999999998" r="96" fill="none" stroke="#666" stroke-width="1.3"/><circle cx="101.90000000000009" cy="101.89999999999998" r="92" fill="none" stroke="#f8f8f8" stroke-width="5"/><circle cx="101.90000000000009" cy="101.89999999999998" r="88.5" fill="none" stroke="url(#shad)" stroke-width="2.5"/><circle cx="101.90000000000009" cy="101.89999999999998" r="85" fill="#fff"/><line x1="45.3" y1="158.5" x2="53.1" y2="150.7" stroke="#111" stroke-width="2.2"/><line x1="40.3" y1="152.9" x2="45.7" y2="148.4" stroke="#333" stroke-width="1"/><line x1="35.7" y1="146.9" x2="41.5" y2="142.9" stroke="#333" stroke-width="1"/><line x1="31.8" y1="140.4" x2="37.9" y2="137.1" stroke="#333" stroke-width="1"/><line x1="28.5" y1="133.7" x2="34.9" y2="130.9" stroke="#333" stroke-width="1"/><line x1="25.8" y1="126.6" x2="36.3" y2="123.2" stroke="#111" stroke-width="2.2"/><line x1="23.8" y1="119.4" x2="30.7" y2="117.8" stroke="#333" stroke-width="1"/><line x1="22.5" y1="111.9" x2="29.5" y2="111.0" stroke="#333" stroke-width="1"/><line x1="21.9" y1="104.4" x2="28.9" y2="104.2" stroke="#333" stroke-width="1"/><line x1="22.1" y1="96.9" x2="29.0" y2="97.3" stroke="#333" stroke-width="1"/><line x1="22.9" y1="89.4" x2="33.7" y2="91.1" stroke="#111" stroke-width="2.2"/><line x1="24.4" y1="82.0" x2="31.2" y2="83.7" stroke="#333" stroke-width="1"/><line x1="26.6" y1="74.8" x2="33.2" y2="77.2" stroke="#333" stroke-width="1"/><line x1="29.5" y1="67.8" x2="35.8" y2="70.8" stroke="#333" stroke-width="1"/><line x1="33.0" y1="61.2" x2="39.1" y2="64.7" stroke="#333" stroke-width="1"/><line x1="37.2" y1="54.9" x2="46.1" y2="61.3" stroke="#111" stroke-width="2.2"/><line x1="41.9" y1="49.0" x2="47.1" y2="53.6" stroke="#333" stroke-width="1"/><line x1="47.1" y1="43.6" x2="51.9" y2="48.7" stroke="#333" stroke-width="1"/><line x1="52.9" y1="38.7" x2="57.2" y2="44.2" stroke="#333" stroke-width="1"/><line x1="59.0" y1="34.4" x2="62.8" y2="40.3" stroke="#333" stroke-width="1"/><line x1="65.6" y1="30.6" x2="70.6" y2="40.4" stroke="#111" stroke-width="2.2"/><line x1="72.5" y1="27.5" x2="75.0" y2="34.0" stroke="#333" stroke-width="1"/><line x1="79.6" y1="25.1" x2="81.5" y2="31.8" stroke="#333" stroke-width="1"/><line x1="86.9" y1="23.3" x2="88.2" y2="30.2" stroke="#333" stroke-width="1"/><line x1="94.4" y1="22.3" x2="95.0" y2="29.2" stroke="#333" stroke-width="1"/><line x1="101.9" y1="21.9" x2="101.9" y2="32.9" stroke="#111" stroke-width="2.2"/><line x1="109.4" y1="22.3" x2="108.8" y2="29.2" stroke="#333" stroke-width="1"/><line x1="116.9" y1="23.3" x2="115.6" y2="30.2" stroke="#333" stroke-width="1"/><line x1="124.2" y1="25.1" x2="122.3" y2="31.8" stroke="#333" stroke-width="1"/><line x1="131.3" y1="27.5" x2="128.8" y2="34.0" stroke="#333" stroke-width="1"/><line x1="138.2" y1="30.6" x2="133.2" y2="40.4" stroke="#111" stroke-width="2.2"/><line x1="144.8" y1="34.4" x2="141.0" y2="40.3" stroke="#333" stroke-width="1"/><line x1="150.9" y1="38.7" x2="146.6" y2="44.2" stroke="#333" stroke-width="1"/><line x1="156.7" y1="43.6" x2="151.9" y2="48.7" stroke="#333" stroke-width="1"/><line x1="161.9" y1="49.0" x2="156.7" y2="53.6" stroke="#333" stroke-width="1"/><line x1="166.6" y1="54.9" x2="157.7" y2="61.3" stroke="#111" stroke-width="2.2"/><line x1="170.8" y1="61.2" x2="164.7" y2="64.7" stroke="#333" stroke-width="1"/><line x1="174.3" y1="67.8" x2="168.0" y2="70.8" stroke="#333" stroke-width="1"/><line x1="177.2" y1="74.8" x2="170.6" y2="77.2" stroke="#333" stroke-width="1"/><line x1="179.4" y1="82.0" x2="172.6" y2="83.7" stroke="#333" stroke-width="1"/><line x1="180.9" y1="89.4" x2="170.1" y2="91.1" stroke="#111" stroke-width="2.2"/><line x1="181.7" y1="96.9" x2="174.8" y2="97.3" stroke="#333" stroke-width="1"/><line x1="181.9" y1="104.4" x2="174.9" y2="104.2" stroke="#333" stroke-width="1"/><line x1="181.3" y1="111.9" x2="174.3" y2="111.0" stroke="#333" stroke-width="1"/><line x1="180.0" y1="119.4" x2="173.1" y2="117.8" stroke="#333" stroke-width="1"/><line x1="178.0" y1="126.6" x2="167.5" y2="123.2" stroke="#111" stroke-width="2.2"/><line x1="175.3" y1="133.7" x2="168.9" y2="130.9" stroke="#333" stroke-width="1"/><line x1="172.0" y1="140.4" x2="165.9" y2="137.1" stroke="#333" stroke-width="1"/><line x1="168.1" y1="146.9" x2="162.3" y2="142.9" stroke="#333" stroke-width="1"/><line x1="163.5" y1="152.9" x2="158.1" y2="148.4" stroke="#333" stroke-width="1"/><line x1="158.5" y1="158.5" x2="150.7" y2="150.7" stroke="#111" stroke-width="2.2"/><text x="62.3" y="147.5" text-anchor="middle" font-family="Liberation Sans" font-weight="bold" font-size="17" fill="#111">0</text><text x="46.6" y="99.1" text-anchor="middle" font-family="Liberation Sans" font-weight="bold" font-size="17" fill="#111">2</text><text x="76.5" y="58.0" text-anchor="middle" font-family="Liberation Sans" font-weight="bold" font-size="17" fill="#111">3</text><text x="127.3" y="58.0" text-anchor="middle" font-family="Liberation Sans" font-weight="bold" font-size="17" fill="#111">5</text><text x="157.2" y="99.1" text-anchor="middle" font-family="Liberation Sans" font-weight="bold" font-size="17" fill="#111">6</text><text x="141.5" y="147.5" text-anchor="middle" font-family="Liberation Sans" font-weight="bold" font-size="17" fill="#111">8</text><text x="100.90000000000009" y="86.89999999999998" text-anchor="middle" font-size="21" font-weight="bold" fill="#b03838">录波</text><text x="99.90000000000009" y="129.89999999999998" text-anchor="middle" font-size="21" fill="#111"><tspan font-family="Liberation Sans" font-weight="bold">3</tspan> 秒</text><polygon points="30.0,20.0 25.0,28.7 15.0,28.7 10.0,20.0 15.0,11.3 25.0,11.3" fill="#444" opacity="0.6"/><polygon points="28.5,18.5 23.5,27.2 13.5,27.2 8.5,18.5 13.5,9.8 23.5,9.8" fill="url(#bolt)" stroke="#777" stroke-width="1"/><circle cx="18.5" cy="18.5" r="6" fill="#eee" stroke="#aaa" stroke-width="0.8"/><polygon points="195.0,20.0 190.0,28.7 180.0,28.7 175.0,20.0 180.0,11.3 190.0,11.3" fill="#444" opacity="0.6"/><polygon points="193.5,18.5 188.5,27.2 178.5,27.2 173.5,18.5 178.5,9.8 188.5,9.8" fill="url(#bolt)" stroke="#777" stroke-width="1"/><circle cx="183.5" cy="18.5" r="6" fill="#eee" stroke="#aaa" stroke-width="0.8"/><polygon points="30.0,185.0 25.0,193.7 15.0,193.7 10.0,185.0 15.0,176.3 25.0,176.3" fill="#444" opacity="0.6"/><polygon points="28.5,183.5 23.5,192.2 13.5,192.2 8.5,183.5 13.5,174.8 23.5,174.8" fill="url(#bolt)" stroke="#777" stroke-width="1"/><circle cx="18.5" cy="183.5" r="6" fill="#eee" stroke="#aaa" stroke-width="0.8"/><polygon points="195.0,185.0 190.0,193.7 180.0,193.7 175.0,185.0 180.0,176.3 190.0,176.3" fill="#444" opacity="0.6"/><polygon points="193.5,183.5 188.5,192.2 178.5,192.2 173.5,183.5 178.5,174.8 188.5,174.8" fill="url(#bolt)" stroke="#777" stroke-width="1"/><circle cx="183.5" cy="183.5" r="6" fill="#eee" stroke="#aaa" stroke-width="0.8"/><ellipse cx="79.5" cy="167" rx="4" ry="3" fill="#777"/><ellipse cx="124.29999999999995" cy="167" rx="4" ry="3" fill="#777"/><line x1="71.40000000000009" y1="26.5" x2="104.90000000000009" y2="110" stroke="#d01010" stroke-width="2"/><circle cx="101.90000000000009" cy="101.89999999999998" r="6" fill="#111"/></svg>
<div class="ab" style="left:1698px;top:475px;width:89px;height:28px;background:#fff;border-top:2px solid #808080;border-left:2px solid #808080;border-bottom:1px solid #fff;border-right:1px solid #fff"></div>
<div class="ab" style="left:1703px;top:476px;font-size:19px;color:#111">启动</div>
<div class="ab" style="left:1764px;top:477px;width:21px;height:24px;background:#efefef;border-right:1px solid #707070;border-bottom:1px solid #707070;border-top:1px solid #fff;border-left:1px solid #fff"></div>
<svg class="ab" style="left:1769px;top:487px" width="10" height="6"><path d="M0 0h10l-5 5z" fill="#111"/></svg>
<div class="ab" style="left:1793px;top:475px;width:96px;height:34px;background:#8080ff;box-shadow:inset 0 0 0 1px #7070b0;color:#fff;font-size:15px;line-height:34px;text-align:center">控制</div>
<div class="ab" style="left:1700px;top:601px;font-size:14px;font-weight:bold;color:#1a1a8c;white-space:nowrap;letter-spacing:2.5px">录波模式选择:</div>
<div class="ab" style="left:1698px;top:623px;width:107px;height:22px;background:#fff;border-top:2px solid #808080;border-left:2px solid #808080;border-bottom:1px solid #fff;border-right:1px solid #fff;box-shadow:inset -1px -1px 0 #d4d0c8"></div><div class="ab" style="left:1701px;top:623px;height:22px;line-height:22px;font-size:14px;font-family:'Liberation Sans',sans-serif;color:#111;white-space:nowrap">25600点/秒</div><div class="ab" style="left:1783px;top:625px;width:20px;height:19px;background:#efefef;border-right:1px solid #707070;border-bottom:1px solid #707070;border-top:1px solid #fff;border-left:1px solid #fff"></div><svg class="ab" style="left:1788px;top:632px" width="10" height="6"><path d="M0 0h10l-5 5z" fill="#111"/></svg>
<div class="ab" style="left:1808px;top:620px;width:81px;height:25px;background:#8080ff;box-shadow:inset 0 0 0 1px #7070b0;color:#fff;font-size:15px;line-height:25px;text-align:center">设置</div>
<div class="ab" style="left:1703px;top:658px;font-size:14px;font-weight:bold;color:#1a1a8c;white-space:nowrap;letter-spacing:2.5px">测试持续时间(1-100秒):</div>
<div class="ab" style="left:1700px;top:683px;width:108px;height:22px;background:#fff;border-top:2px solid #808080;border-left:2px solid #808080;border-bottom:1px solid #fff;border-right:1px solid #fff;font-size:13px;line-height:20px;padding-left:2px;color:#111">8</div>
<div class="ab" style="left:1810px;top:680px;width:79px;height:26px;background:#8080ff;box-shadow:inset 0 0 0 1px #7070b0;color:#fff;font-size:15px;line-height:26px;text-align:center">设置</div>
<div class="ab" style="left:1809px;top:736px;width:81px;height:34px;background:#c84000;box-shadow:inset 0 0 0 1px #a04020;color:#f8f0d0;font-size:15px;line-height:34px;text-align:center">召测参数</div>
<div class="ab" style="left:1718px;top:853px;width:161px;height:81px;background:#fff;border-top:1px solid #f4f4f4;border-left:1px solid #f4f4f4;border-right:2px solid #707070;border-bottom:2px solid #707070"></div>
<svg class="ab" style="left:1783px;top:866px" width="32" height="32"><path d="M3 2h14l7 13-10 6z" fill="#fff" stroke="#222" stroke-width="1"/><path d="M4 3h12l1 3H5z" fill="#aaa"/><path d="M6 8h12M8 12h12M10 16h11" stroke="#bbb" stroke-width="0.8"/><path d="M0 15h7l2 3 2-3h4l-4 5 4 6H8l-2-3-2 3H0l4-6z" fill="#20b0a0" stroke="#0a3a3a" stroke-width="0.8"/><path d="M17 25l3-3 3 3 4-6v8h-9z" fill="#8020c0"/><path d="M24 22l4-5v9h-4z" fill="#e02020"/></svg>
<div class="ab" style="left:1718px;top:908px;width:160px;text-align:center;font-size:17px;font-weight:bold;color:#111;white-space:nowrap">保存为<span style="font-family:'Liberation Mono',monospace">Excel</span></div>
<div class="ab" style="left:3px;top:526px;width:1508px;height:22px;background:#efefef;border-top:2px solid #fafafa"></div>
<svg class="ab" style="left:9px;top:531px" width="6" height="10"><path d="M5 0v9L0 4.5z" fill="#606060"/></svg>
<svg class="ab" style="left:1499px;top:531px" width="6" height="10"><path d="M0 0v9l5-4.5z" fill="#606060"/></svg>
<div class="ab" style="left:465px;top:528px;width:18px;height:17px;border:1px solid #9a9a9a;border-radius:2px;background:linear-gradient(#f4f4f4,#dcdcdc)"></div>
<div class="ab" style="left:470px;top:532px;width:8px;height:8px;border-left:1px solid #555;border-right:1px solid #555"></div><div class="ab" style="left:473px;top:532px;width:1px;height:8px;background:#555"></div>
<div class="ab" style="left:6px;top:548px;width:1678px;height:483px;background:#f0f0f0;border-top:1px solid #6e6e6e;border-left:1px solid #6e6e6e;border-right:1px solid #6e6e6e"></div>
<div class="ab" style="left:4px;top:526px;width:2px;height:505px;background:#f4f4f4"></div>
<div class="ab" style="left:7px;top:549px;width:20px;height:19px;background:#f0f0f0;border-right:1px solid #8a8a8a;border-bottom:1px solid #8a8a8a;border-top:1px solid #fff;border-left:1px solid #fff"></div>
<svg class="ab" style="left:14px;top:553px" width="6" height="11"><path d="M5 0v10L0 5z" fill="#111"/></svg>
<div class="ab" style="left:28px;top:549px;width:20px;height:19px;background:#f0f0f0;border-right:1px solid #8a8a8a;border-bottom:1px solid #8a8a8a;border-top:1px solid #fff;border-left:1px solid #fff"></div>
<svg class="ab" style="left:35px;top:553px" width="6" height="11"><path d="M0 0v10l5-5z" fill="#111"/></svg>
<svg class="ab" style="left:0;top:548px" width="700" height="22"><path d="M50 20L56 2.5H147L152 20" fill="#f0f0f0" stroke="#111" stroke-width="1.2"/><path d="M152 20L158 2.5H260L267 20" fill="#ffffff" stroke="#111" stroke-width="1.2"/><path d="M267 20L273 2.5H374L380 20" fill="#f0f0f0" stroke="#111" stroke-width="1.2"/><path d="M380 20L386 2.5H487L493 20" fill="#f0f0f0" stroke="#111" stroke-width="1.2"/><path d="M493 20L499 2.5H598L604 20" fill="#f0f0f0" stroke="#111" stroke-width="1.2"/><line x1="48" y1="20" x2="606" y2="20" stroke="#111" stroke-width="1.2"/><text x="101.5" y="17" text-anchor="middle" font-size="19" fill="#3a3a3a">录波数据</text><text x="209.0" y="17" text-anchor="middle" font-size="19" fill="#3a3a3a">录波波形1</text><text x="323.5" y="17" text-anchor="middle" font-size="19" fill="#3a3a3a">录波波形2</text><text x="436.5" y="17" text-anchor="middle" font-size="19" fill="#3a3a3a">录波波形3</text><text x="548.5" y="17" text-anchor="middle" font-size="19" fill="#3a3a3a">录波波形4</text></svg>
<svg class="ab" style="left:0;top:0" width="1919" height="1031"><rect x="7" y="568" width="1327" height="463" fill="#fff"/><rect x="7" y="568" width="1327" height="21" fill="#ececec"/><rect x="7" y="568" width="79" height="463" fill="#eeeeee"/><line x1="7" y1="568.5" x2="1334" y2="568.5" stroke="#b4b4b4" stroke-width="1"/><line x1="7" y1="589.5" x2="1334" y2="589.5" stroke="#b4b4b4" stroke-width="1"/><line x1="7" y1="631.5" x2="1334" y2="631.5" stroke="#b4b4b4" stroke-width="1"/><line x1="7" y1="652.5" x2="1334" y2="652.5" stroke="#b4b4b4" stroke-width="1"/><line x1="7" y1="673.5" x2="1334" y2="673.5" stroke="#b4b4b4" stroke-width="1"/><line x1="7" y1="694.5" x2="1334" y2="694.5" stroke="#b4b4b4" stroke-width="1"/><line x1="7" y1="715.5" x2="1334" y2="715.5" stroke="#b4b4b4" stroke-width="1"/><line x1="7" y1="736.5" x2="1334" y2="736.5" stroke="#b4b4b4" stroke-width="1"/><line x1="7" y1="757.5" x2="1334" y2="757.5" stroke="#b4b4b4" stroke-width="1"/><line x1="7" y1="778.5" x2="1334" y2="778.5" stroke="#b4b4b4" stroke-width="1"/><line x1="7" y1="799.5" x2="1334" y2="799.5" stroke="#b4b4b4" stroke-width="1"/><line x1="7" y1="820.5" x2="1334" y2="820.5" stroke="#b4b4b4" stroke-width="1"/><line x1="7" y1="841.5" x2="1334" y2="841.5" stroke="#b4b4b4" stroke-width="1"/><line x1="7" y1="862.5" x2="1334" y2="862.5" stroke="#b4b4b4" stroke-width="1"/><line x1="7" y1="883.5" x2="1334" y2="883.5" stroke="#b4b4b4" stroke-width="1"/><line x1="7" y1="904.5" x2="1334" y2="904.5" stroke="#b4b4b4" stroke-width="1"/><line x1="7" y1="925.5" x2="1334" y2="925.5" stroke="#b4b4b4" stroke-width="1"/><line x1="7" y1="943.5" x2="1334" y2="943.5" stroke="#b4b4b4" stroke-width="1"/><line x1="7" y1="961.5" x2="1334" y2="961.5" stroke="#b4b4b4" stroke-width="1"/><line x1="7" y1="979.5" x2="1334" y2="979.5" stroke="#b4b4b4" stroke-width="1"/><line x1="7" y1="997.5" x2="1334" y2="997.5" stroke="#b4b4b4" stroke-width="1"/><line x1="7" y1="1015.5" x2="1334" y2="1015.5" stroke="#b4b4b4" stroke-width="1"/><line x1="7" y1="1033.5" x2="1334" y2="1033.5" stroke="#b4b4b4" stroke-width="1"/><line x1="7" y1="610.5" x2="86" y2="610.5" stroke="#b4b4b4" stroke-width="1"/><line x1="86" y1="610.5" x2="1334" y2="610.5" stroke="#000" stroke-width="1.2"/><line x1="86.5" y1="568" x2="86.5" y2="1031" stroke="#b4b4b4" stroke-width="1"/><line x1="190.5" y1="568" x2="190.5" y2="1031" stroke="#b4b4b4" stroke-width="1"/><line x1="294.5" y1="568" x2="294.5" y2="1031" stroke="#b4b4b4" stroke-width="1"/><line x1="398.5" y1="568" x2="398.5" y2="1031" stroke="#b4b4b4" stroke-width="1"/><line x1="502.5" y1="568" x2="502.5" y2="1031" stroke="#b4b4b4" stroke-width="1"/><line x1="606.5" y1="568" x2="606.5" y2="1031" stroke="#b4b4b4" stroke-width="1"/><line x1="710.5" y1="568" x2="710.5" y2="1031" stroke="#b4b4b4" stroke-width="1"/><line x1="814.5" y1="568" x2="814.5" y2="1031" stroke="#b4b4b4" stroke-width="1"/><line x1="918.5" y1="568" x2="918.5" y2="1031" stroke="#b4b4b4" stroke-width="1"/><line x1="1022.5" y1="568" x2="1022.5" y2="1031" stroke="#b4b4b4" stroke-width="1"/><line x1="1126.5" y1="568" x2="1126.5" y2="1031" stroke="#b4b4b4" stroke-width="1"/><line x1="1230.5" y1="568" x2="1230.5" y2="1031" stroke="#b4b4b4" stroke-width="1"/><line x1="1334.5" y1="568" x2="1334.5" y2="1031" stroke="#b4b4b4" stroke-width="1"/><line x1="1334.5" y1="589" x2="1334.5" y2="1031" stroke="#333" stroke-width="1"/></svg>
<div class="cell" style="left:7px;width:79px;top:589px;height:21px;line-height:24px;text-align:center;font-family:'Liberation Serif',serif;font-weight:bold;font-size:17.5px;color:#111">1</div>
<div class="cell" style="left:7px;width:79px;top:610px;height:21px;line-height:24px;text-align:center;font-family:'Liberation Serif',serif;font-weight:bold;font-size:17.5px;color:#111">2</div>
<div class="cell" style="left:7px;width:79px;top:631px;height:21px;line-height:24px;text-align:center;font-family:'Liberation Serif',serif;font-weight:bold;font-size:17.5px;color:#111">3</div>
<div class="cell" style="left:7px;width:79px;top:652px;height:21px;line-height:24px;text-align:center;font-family:'Liberation Serif',serif;font-weight:bold;font-size:17.5px;color:#111">4</div>
<div class="cell" style="left:7px;width:79px;top:673px;height:21px;line-height:24px;text-align:center;font-family:'Liberation Serif',serif;font-weight:bold;font-size:17.5px;color:#111">5</div>
<div class="cell" style="left:7px;width:79px;top:694px;height:21px;line-height:24px;text-align:center;font-family:'Liberation Serif',serif;font-weight:bold;font-size:17.5px;color:#111">6</div>
<div class="cell" style="left:7px;width:79px;top:715px;height:21px;line-height:24px;text-align:center;font-family:'Liberation Serif',serif;font-weight:bold;font-size:17.5px;color:#111">7</div>
<div class="cell" style="left:7px;width:79px;top:736px;height:21px;line-height:24px;text-align:center;font-family:'Liberation Serif',serif;font-weight:bold;font-size:17.5px;color:#111">8</div>
<div class="cell" style="left:7px;width:79px;top:757px;height:21px;line-height:24px;text-align:center;font-family:'Liberation Serif',serif;font-weight:bold;font-size:17.5px;color:#111">9</div>
<div class="cell" style="left:7px;width:79px;top:778px;height:21px;line-height:24px;text-align:center;font-family:'Liberation Serif',serif;font-weight:bold;font-size:17.5px;color:#111">10</div>
<div class="cell" style="left:7px;width:79px;top:799px;height:21px;line-height:24px;text-align:center;font-family:'Liberation Serif',serif;font-weight:bold;font-size:17.5px;color:#111">11</div>
<div class="cell" style="left:7px;width:79px;top:820px;height:21px;line-height:24px;text-align:center;font-family:'Liberation Serif',serif;font-weight:bold;font-size:17.5px;color:#111">12</div>
<div class="cell" style="left:7px;width:79px;top:841px;height:21px;line-height:24px;text-align:center;font-family:'Liberation Serif',serif;font-weight:bold;font-size:17.5px;color:#111">13</div>
<div class="cell" style="left:7px;width:79px;top:862px;height:21px;line-height:24px;text-align:center;font-family:'Liberation Serif',serif;font-weight:bold;font-size:17.5px;color:#111">14</div>
<div class="cell" style="left:7px;width:79px;top:883px;height:21px;line-height:24px;text-align:center;font-family:'Liberation Serif',serif;font-weight:bold;font-size:17.5px;color:#111">15</div>
<div class="cell" style="left:7px;width:79px;top:904px;height:21px;line-height:24px;text-align:center;font-family:'Liberation Serif',serif;font-weight:bold;font-size:17.5px;color:#111">16</div>
<div class="cell" style="left:7px;width:79px;top:925px;height:18px;line-height:21px;text-align:center;font-family:'Liberation Serif',serif;font-weight:bold;font-size:17.5px;color:#111">17</div>
<div class="cell" style="left:7px;width:79px;top:943px;height:18px;line-height:21px;text-align:center;font-family:'Liberation Serif',serif;font-weight:bold;font-size:17.5px;color:#111">18</div>
<div class="cell" style="left:7px;width:79px;top:961px;height:18px;line-height:21px;text-align:center;font-family:'Liberation Serif',serif;font-weight:bold;font-size:17.5px;color:#111">19</div>
<div class="cell" style="left:7px;width:79px;top:979px;height:18px;line-height:21px;text-align:center;font-family:'Liberation Serif',serif;font-weight:bold;font-size:17.5px;color:#111">20</div>
<div class="cell" style="left:7px;width:79px;top:997px;height:18px;line-height:21px;text-align:center;font-family:'Liberation Serif',serif;font-weight:bold;font-size:17.5px;color:#111">21</div>
<div class="cell" style="left:7px;width:79px;top:1015px;height:18px;line-height:21px;text-align:center;font-family:'Liberation Serif',serif;font-weight:bold;font-size:17.5px;color:#111">22</div>
<div class="cell" style="left:89px;top:590px;height:20px;line-height:21px;font-size:16px;color:#111;letter-spacing:0.9px">第1单元电压</div>
<div class="cell" style="left:193px;top:590px;height:20px;line-height:21px;font-size:16px;color:#111;letter-spacing:0.9px">第2单元电压</div>
<div class="cell" style="left:297px;top:590px;height:20px;line-height:21px;font-size:16px;color:#111;letter-spacing:0.9px">第3单元电压</div>
<div class="cell" style="left:401px;top:590px;height:20px;line-height:21px;font-size:16px;color:#111;letter-spacing:0.9px">第4单元电压</div>
<div class="cell" style="left:505px;top:590px;height:20px;line-height:21px;font-size:16px;color:#111;letter-spacing:0.9px">第5单元电压</div>
<div class="cell" style="left:609px;top:590px;height:20px;line-height:21px;font-size:16px;color:#111;letter-spacing:0.9px">第6单元电压</div>
<div class="cell" style="left:713px;top:590px;height:20px;line-height:21px;font-size:16px;color:#111;letter-spacing:0.9px">第1单元电流</div>
<div class="cell" style="left:817px;top:590px;height:20px;line-height:21px;font-size:16px;color:#111;letter-spacing:0.9px">第2单元电流</div>
<div class="cell" style="left:921px;top:590px;height:20px;line-height:21px;font-size:16px;color:#111;letter-spacing:0.9px">第3单元电流</div>
<div class="cell" style="left:1025px;top:590px;height:20px;line-height:21px;font-size:16px;color:#111;letter-spacing:0.9px">第4单元电流</div>
<div class="cell" style="left:1129px;top:590px;height:20px;line-height:21px;font-size:16px;color:#111;letter-spacing:0.9px">第5单元电流</div>
<div class="cell" style="left:1233px;top:590px;height:20px;line-height:21px;font-size:16px;color:#111;letter-spacing:0.9px">第6单元电流</div>
<div class="cell" style="left:90px;top:610px;height:21px;line-height:27px;font-family:'Liberation Sans',sans-serif;font-size:16px;letter-spacing:0.1px;white-space:pre;color:#2a2a2a">104. 96</div>
<div class="cell" style="left:194px;top:610px;height:21px;line-height:27px;font-family:'Liberation Sans',sans-serif;font-size:16px;letter-spacing:0.1px;white-space:pre;color:#2a2a2a">104. 91</div>
<div class="cell" style="left:298px;top:610px;height:21px;line-height:27px;font-family:'Liberation Sans',sans-serif;font-size:16px;letter-spacing:0.1px;white-space:pre;color:#2a2a2a">104. 84</div>
<div class="cell" style="left:402px;top:610px;height:21px;line-height:27px;font-family:'Liberation Sans',sans-serif;font-size:16px;letter-spacing:0.1px;white-space:pre;color:#2a2a2a">104. 96</div>
<div class="cell" style="left:506px;top:610px;height:21px;line-height:27px;font-family:'Liberation Sans',sans-serif;font-size:16px;letter-spacing:0.1px;white-space:pre;color:#2a2a2a">104. 90</div>
<div class="cell" style="left:610px;top:610px;height:21px;line-height:27px;font-family:'Liberation Sans',sans-serif;font-size:16px;letter-spacing:0.1px;white-space:pre;color:#2a2a2a">104. 97</div>
<div class="cell" style="left:714px;top:610px;height:21px;line-height:27px;font-family:'Liberation Sans',sans-serif;font-size:16px;letter-spacing:0.1px;white-space:pre;color:#2a2a2a">0. 00</div>
<div class="cell" style="left:818px;top:610px;height:21px;line-height:27px;font-family:'Liberation Sans',sans-serif;font-size:16px;letter-spacing:0.1px;white-space:pre;color:#2a2a2a">0. 00</div>
<div class="cell" style="left:922px;top:610px;height:21px;line-height:27px;font-family:'Liberation Sans',sans-serif;font-size:16px;letter-spacing:0.1px;white-space:pre;color:#2a2a2a">0. 00</div>
<div class="cell" style="left:1026px;top:610px;height:21px;line-height:27px;font-family:'Liberation Sans',sans-serif;font-size:16px;letter-spacing:0.1px;white-space:pre;color:#2a2a2a">0. 00</div>
<div class="cell" style="left:1130px;top:610px;height:21px;line-height:27px;font-family:'Liberation Sans',sans-serif;font-size:16px;letter-spacing:0.1px;white-space:pre;color:#2a2a2a">0. 00</div>
<div class="cell" style="left:1234px;top:610px;height:21px;line-height:27px;font-family:'Liberation Sans',sans-serif;font-size:16px;letter-spacing:0.1px;white-space:pre;color:#2a2a2a">0. 00</div>
<div class="cell" style="left:90px;top:631px;height:21px;line-height:27px;font-family:'Liberation Sans',sans-serif;font-size:16px;letter-spacing:0.1px;white-space:pre;color:#2a2a2a">105. 83</div>
<div class="cell" style="left:194px;top:631px;height:21px;line-height:27px;font-family:'Liberation Sans',sans-serif;font-size:16px;letter-spacing:0.1px;white-space:pre;color:#2a2a2a">105. 80</div>
<div class="cell" style="left:298px;top:631px;height:21px;line-height:27px;font-family:'Liberation Sans',sans-serif;font-size:16px;letter-spacing:0.1px;white-space:pre;color:#2a2a2a">105. 78</div>
<div class="cell" style="left:402px;top:631px;height:21px;line-height:27px;font-family:'Liberation Sans',sans-serif;font-size:16px;letter-spacing:0.1px;white-space:pre;color:#2a2a2a">105. 87</div>
<div class="cell" style="left:506px;top:631px;height:21px;line-height:27px;font-family:'Liberation Sans',sans-serif;font-size:16px;letter-spacing:0.1px;white-space:pre;color:#2a2a2a">105. 75</div>
<div class="cell" style="left:610px;top:631px;height:21px;line-height:27px;font-family:'Liberation Sans',sans-serif;font-size:16px;letter-spacing:0.1px;white-space:pre;color:#2a2a2a">105. 89</div>
<div class="cell" style="left:714px;top:631px;height:21px;line-height:27px;font-family:'Liberation Sans',sans-serif;font-size:16px;letter-spacing:0.1px;white-space:pre;color:#2a2a2a">0. 00</div>
<div class="cell" style="left:818px;top:631px;height:21px;line-height:27px;font-family:'Liberation Sans',sans-serif;font-size:16px;letter-spacing:0.1px;white-space:pre;color:#2a2a2a">0. 00</div>
<div class="cell" style="left:922px;top:631px;height:21px;line-height:27px;font-family:'Liberation Sans',sans-serif;font-size:16px;letter-spacing:0.1px;white-space:pre;color:#2a2a2a">0. 00</div>
<div class="cell" style="left:1026px;top:631px;height:21px;line-height:27px;font-family:'Liberation Sans',sans-serif;font-size:16px;letter-spacing:0.1px;white-space:pre;color:#2a2a2a">0. 00</div>
<div class="cell" style="left:1130px;top:631px;height:21px;line-height:27px;font-family:'Liberation Sans',sans-serif;font-size:16px;letter-spacing:0.1px;white-space:pre;color:#2a2a2a">0. 00</div>
<div class="cell" style="left:1234px;top:631px;height:21px;line-height:27px;font-family:'Liberation Sans',sans-serif;font-size:16px;letter-spacing:0.1px;white-space:pre;color:#2a2a2a">0. 00</div>
<div class="cell" style="left:90px;top:652px;height:21px;line-height:27px;font-family:'Liberation Sans',sans-serif;font-size:16px;letter-spacing:0.1px;white-space:pre;color:#2a2a2a">106. 67</div>
<div class="cell" style="left:194px;top:652px;height:21px;line-height:27px;font-family:'Liberation Sans',sans-serif;font-size:16px;letter-spacing:0.1px;white-space:pre;color:#2a2a2a">106. 55</div>
<div class="cell" style="left:298px;top:652px;height:21px;line-height:27px;font-family:'Liberation Sans',sans-serif;font-size:16px;letter-spacing:0.1px;white-space:pre;color:#2a2a2a">106. 58</div>
<div class="cell" style="left:402px;top:652px;height:21px;line-height:27px;font-family:'Liberation Sans',sans-serif;font-size:16px;letter-spacing:0.1px;white-space:pre;color:#2a2a2a">106. 73</div>
<div class="cell" style="left:506px;top:652px;height:21px;line-height:27px;font-family:'Liberation Sans',sans-serif;font-size:16px;letter-spacing:0.1px;white-space:pre;color:#2a2a2a">106. 61</div>
<div class="cell" style="left:610px;top:652px;height:21px;line-height:27px;font-family:'Liberation Sans',sans-serif;font-size:16px;letter-spacing:0.1px;white-space:pre;color:#2a2a2a">106. 68</div>
<div class="cell" style="left:714px;top:652px;height:21px;line-height:27px;font-family:'Liberation Sans',sans-serif;font-size:16px;letter-spacing:0.1px;white-space:pre;color:#2a2a2a">0. 00</div>
<div class="cell" style="left:818px;top:652px;height:21px;line-height:27px;font-family:'Liberation Sans',sans-serif;font-size:16px;letter-spacing:0.1px;white-space:pre;color:#2a2a2a">0. 00</div>
<div class="cell" style="left:922px;top:652px;height:21px;line-height:27px;font-family:'Liberation Sans',sans-serif;font-size:16px;letter-spacing:0.1px;white-space:pre;color:#2a2a2a">0. 00</div>
<div class="cell" style="left:1026px;top:652px;height:21px;line-height:27px;font-family:'Liberation Sans',sans-serif;font-size:16px;letter-spacing:0.1px;white-space:pre;color:#2a2a2a">0. 00</div>
<div class="cell" style="left:1130px;top:652px;height:21px;line-height:27px;font-family:'Liberation Sans',sans-serif;font-size:16px;letter-spacing:0.1px;white-space:pre;color:#2a2a2a">0. 00</div>
<div class="cell" style="left:1234px;top:652px;height:21px;line-height:27px;font-family:'Liberation Sans',sans-serif;font-size:16px;letter-spacing:0.1px;white-space:pre;color:#2a2a2a">0. 00</div>
<div class="cell" style="left:90px;top:673px;height:21px;line-height:27px;font-family:'Liberation Sans',sans-serif;font-size:16px;letter-spacing:0.1px;white-space:pre;color:#2a2a2a">107. 49</div>
<div class="cell" style="left:194px;top:673px;height:21px;line-height:27px;font-family:'Liberation Sans',sans-serif;font-size:16px;letter-spacing:0.1px;white-space:pre;color:#2a2a2a">107. 46</div>
<div class="cell" style="left:298px;top:673px;height:21px;line-height:27px;font-family:'Liberation Sans',sans-serif;font-size:16px;letter-spacing:0.1px;white-space:pre;color:#2a2a2a">107. 40</div>
<div class="cell" style="left:402px;top:673px;height:21px;line-height:27px;font-family:'Liberation Sans',sans-serif;font-size:16px;letter-spacing:0.1px;white-space:pre;color:#2a2a2a">107. 57</div>
<div class="cell" style="left:506px;top:673px;height:21px;line-height:27px;font-family:'Liberation Sans',sans-serif;font-size:16px;letter-spacing:0.1px;white-space:pre;color:#2a2a2a">107. 46</div>
<div class="cell" style="left:610px;top:673px;height:21px;line-height:27px;font-family:'Liberation Sans',sans-serif;font-size:16px;letter-spacing:0.1px;white-space:pre;color:#2a2a2a">107. 46</div>
<div class="cell" style="left:714px;top:673px;height:21px;line-height:27px;font-family:'Liberation Sans',sans-serif;font-size:16px;letter-spacing:0.1px;white-space:pre;color:#2a2a2a">0. 00</div>
<div class="cell" style="left:818px;top:673px;height:21px;line-height:27px;font-family:'Liberation Sans',sans-serif;font-size:16px;letter-spacing:0.1px;white-space:pre;color:#2a2a2a">0. 00</div>
<div class="cell" style="left:922px;top:673px;height:21px;line-height:27px;font-family:'Liberation Sans',sans-serif;font-size:16px;letter-spacing:0.1px;white-space:pre;color:#2a2a2a">0. 00</div>
<div class="cell" style="left:1026px;top:673px;height:21px;line-height:27px;font-family:'Liberation Sans',sans-serif;font-size:16px;letter-spacing:0.1px;white-space:pre;color:#2a2a2a">0. 00</div>
<div class="cell" style="left:1130px;top:673px;height:21px;line-height:27px;font-family:'Liberation Sans',sans-serif;font-size:16px;letter-spacing:0.1px;white-space:pre;color:#2a2a2a">0. 00</div>
<div class="cell" style="left:1234px;top:673px;height:21px;line-height:27px;font-family:'Liberation Sans',sans-serif;font-size:16px;letter-spacing:0.1px;white-space:pre;color:#2a2a2a">0. 00</div>
<div class="cell" style="left:90px;top:694px;height:21px;line-height:27px;font-family:'Liberation Sans',sans-serif;font-size:16px;letter-spacing:0.1px;white-space:pre;color:#2a2a2a">108. 15</div>
<div class="cell" style="left:194px;top:694px;height:21px;line-height:27px;font-family:'Liberation Sans',sans-serif;font-size:16px;letter-spacing:0.1px;white-space:pre;color:#2a2a2a">108. 20</div>
<div class="cell" style="left:298px;top:694px;height:21px;line-height:27px;font-family:'Liberation Sans',sans-serif;font-size:16px;letter-spacing:0.1px;white-space:pre;color:#2a2a2a">108. 17</div>
<div class="cell" style="left:402px;top:694px;height:21px;line-height:27px;font-family:'Liberation Sans',sans-serif;font-size:16px;letter-spacing:0.1px;white-space:pre;color:#2a2a2a">108. 32</div>
<div class="cell" style="left:506px;top:694px;height:21px;line-height:27px;font-family:'Liberation Sans',sans-serif;font-size:16px;letter-spacing:0.1px;white-space:pre;color:#2a2a2a">108. 17</div>
<div class="cell" style="left:610px;top:694px;height:21px;line-height:27px;font-family:'Liberation Sans',sans-serif;font-size:16px;letter-spacing:0.1px;white-space:pre;color:#2a2a2a">108. 29</div>
<div class="cell" style="left:714px;top:694px;height:21px;line-height:27px;font-family:'Liberation Sans',sans-serif;font-size:16px;letter-spacing:0.1px;white-space:pre;color:#2a2a2a">0. 00</div>
<div class="cell" style="left:818px;top:694px;height:21px;line-height:27px;font-family:'Liberation Sans',sans-serif;font-size:16px;letter-spacing:0.1px;white-space:pre;color:#2a2a2a">0. 00</div>
<div class="cell" style="left:922px;top:694px;height:21px;line-height:27px;font-family:'Liberation Sans',sans-serif;font-size:16px;letter-spacing:0.1px;white-space:pre;color:#2a2a2a">0. 00</div>
<div class="cell" style="left:1026px;top:694px;height:21px;line-height:27px;font-family:'Liberation Sans',sans-serif;font-size:16px;letter-spacing:0.1px;white-space:pre;color:#2a2a2a">0. 00</div>
<div class="cell" style="left:1130px;top:694px;height:21px;line-height:27px;font-family:'Liberation Sans',sans-serif;font-size:16px;letter-spacing:0.1px;white-space:pre;color:#2a2a2a">0. 00</div>
<div class="cell" style="left:1234px;top:694px;height:21px;line-height:27px;font-family:'Liberation Sans',sans-serif;font-size:16px;letter-spacing:0.1px;white-space:pre;color:#2a2a2a">0. 00</div>
<div class="cell" style="left:90px;top:715px;height:21px;line-height:27px;font-family:'Liberation Sans',sans-serif;font-size:16px;letter-spacing:0.1px;white-space:pre;color:#2a2a2a">109. 04</div>
<div class="cell" style="left:194px;top:715px;height:21px;line-height:27px;font-family:'Liberation Sans',sans-serif;font-size:16px;letter-spacing:0.1px;white-space:pre;color:#2a2a2a">108. 86</div>
<div class="cell" style="left:298px;top:715px;height:21px;line-height:27px;font-family:'Liberation Sans',sans-serif;font-size:16px;letter-spacing:0.1px;white-space:pre;color:#2a2a2a">108. 95</div>
<div class="cell" style="left:402px;top:715px;height:21px;line-height:27px;font-family:'Liberation Sans',sans-serif;font-size:16px;letter-spacing:0.1px;white-space:pre;color:#2a2a2a">109. 04</div>
<div class="cell" style="left:506px;top:715px;height:21px;line-height:27px;font-family:'Liberation Sans',sans-serif;font-size:16px;letter-spacing:0.1px;white-space:pre;color:#2a2a2a">108. 96</div>
<div class="cell" style="left:610px;top:715px;height:21px;line-height:27px;font-family:'Liberation Sans',sans-serif;font-size:16px;letter-spacing:0.1px;white-space:pre;color:#2a2a2a">109. 04</div>
<div class="cell" style="left:714px;top:715px;height:21px;line-height:27px;font-family:'Liberation Sans',sans-serif;font-size:16px;letter-spacing:0.1px;white-space:pre;color:#2a2a2a">0. 00</div>
<div class="cell" style="left:818px;top:715px;height:21px;line-height:27px;font-family:'Liberation Sans',sans-serif;font-size:16px;letter-spacing:0.1px;white-space:pre;color:#2a2a2a">0. 00</div>
<div class="cell" style="left:922px;top:715px;height:21px;line-height:27px;font-family:'Liberation Sans',sans-serif;font-size:16px;letter-spacing:0.1px;white-space:pre;color:#2a2a2a">0. 00</div>
<div class="cell" style="left:1026px;top:715px;height:21px;line-height:27px;font-family:'Liberation Sans',sans-serif;font-size:16px;letter-spacing:0.1px;white-space:pre;color:#2a2a2a">0. 00</div>
<div class="cell" style="left:1130px;top:715px;height:21px;line-height:27px;font-family:'Liberation Sans',sans-serif;font-size:16px;letter-spacing:0.1px;white-space:pre;color:#2a2a2a">0. 00</div>
<div class="cell" style="left:1234px;top:715px;height:21px;line-height:27px;font-family:'Liberation Sans',sans-serif;font-size:16px;letter-spacing:0.1px;white-space:pre;color:#2a2a2a">0. 00</div>
<div class="cell" style="left:90px;top:736px;height:21px;line-height:27px;font-family:'Liberation Sans',sans-serif;font-size:16px;letter-spacing:0.1px;white-space:pre;color:#2a2a2a">109. 76</div>
<div class="cell" style="left:194px;top:736px;height:21px;line-height:27px;font-family:'Liberation Sans',sans-serif;font-size:16px;letter-spacing:0.1px;white-space:pre;color:#2a2a2a">109. 73</div>
<div class="cell" style="left:298px;top:736px;height:21px;line-height:27px;font-family:'Liberation Sans',sans-serif;font-size:16px;letter-spacing:0.1px;white-space:pre;color:#2a2a2a">109. 70</div>
<div class="cell" style="left:402px;top:736px;height:21px;line-height:27px;font-family:'Liberation Sans',sans-serif;font-size:16px;letter-spacing:0.1px;white-space:pre;color:#2a2a2a">109. 76</div>
<div class="cell" style="left:506px;top:736px;height:21px;line-height:27px;font-family:'Liberation Sans',sans-serif;font-size:16px;letter-spacing:0.1px;white-space:pre;color:#2a2a2a">109. 74</div>
<div class="cell" style="left:610px;top:736px;height:21px;line-height:27px;font-family:'Liberation Sans',sans-serif;font-size:16px;letter-spacing:0.1px;white-space:pre;color:#2a2a2a">109. 74</div>
<div class="cell" style="left:714px;top:736px;height:21px;line-height:27px;font-family:'Liberation Sans',sans-serif;font-size:16px;letter-spacing:0.1px;white-space:pre;color:#2a2a2a">0. 00</div>
<div class="cell" style="left:818px;top:736px;height:21px;line-height:27px;font-family:'Liberation Sans',sans-serif;font-size:16px;letter-spacing:0.1px;white-space:pre;color:#2a2a2a">0. 00</div>
<div class="cell" style="left:922px;top:736px;height:21px;line-height:27px;font-family:'Liberation Sans',sans-serif;font-size:16px;letter-spacing:0.1px;white-space:pre;color:#2a2a2a">0. 00</div>
<div class="cell" style="left:1026px;top:736px;height:21px;line-height:27px;font-family:'Liberation Sans',sans-serif;font-size:16px;letter-spacing:0.1px;white-space:pre;color:#2a2a2a">0. 00</div>
<div class="cell" style="left:1130px;top:736px;height:21px;line-height:27px;font-family:'Liberation Sans',sans-serif;font-size:16px;letter-spacing:0.1px;white-space:pre;color:#2a2a2a">0. 00</div>
<div class="cell" style="left:1234px;top:736px;height:21px;line-height:27px;font-family:'Liberation Sans',sans-serif;font-size:16px;letter-spacing:0.1px;white-space:pre;color:#2a2a2a">0. 00</div>
<div class="cell" style="left:90px;top:757px;height:21px;line-height:27px;font-family:'Liberation Sans',sans-serif;font-size:16px;letter-spacing:0.1px;white-space:pre;color:#2a2a2a">110. 52</div>
<div class="cell" style="left:194px;top:757px;height:21px;line-height:27px;font-family:'Liberation Sans',sans-serif;font-size:16px;letter-spacing:0.1px;white-space:pre;color:#2a2a2a">110. 51</div>
<div class="cell" style="left:298px;top:757px;height:21px;line-height:27px;font-family:'Liberation Sans',sans-serif;font-size:16px;letter-spacing:0.1px;white-space:pre;color:#2a2a2a">110. 49</div>
<div class="cell" style="left:402px;top:757px;height:21px;line-height:27px;font-family:'Liberation Sans',sans-serif;font-size:16px;letter-spacing:0.1px;white-space:pre;color:#2a2a2a">110. 55</div>
<div class="cell" style="left:506px;top:757px;height:21px;line-height:27px;font-family:'Liberation Sans',sans-serif;font-size:16px;letter-spacing:0.1px;white-space:pre;color:#2a2a2a">110. 52</div>
<div class="cell" style="left:610px;top:757px;height:21px;line-height:27px;font-family:'Liberation Sans',sans-serif;font-size:16px;letter-spacing:0.1px;white-space:pre;color:#2a2a2a">110. 63</div>
<div class="cell" style="left:714px;top:757px;height:21px;line-height:27px;font-family:'Liberation Sans',sans-serif;font-size:16px;letter-spacing:0.1px;white-space:pre;color:#2a2a2a">0. 00</div>
<div class="cell" style="left:818px;top:757px;height:21px;line-height:27px;font-family:'Liberation Sans',sans-serif;font-size:16px;letter-spacing:0.1px;white-space:pre;color:#2a2a2a">0. 00</div>
<div class="cell" style="left:922px;top:757px;height:21px;line-height:27px;font-family:'Liberation Sans',sans-serif;font-size:16px;letter-spacing:0.1px;white-space:pre;color:#2a2a2a">0. 00</div>
<div class="cell" style="left:1026px;top:757px;height:21px;line-height:27px;font-family:'Liberation Sans',sans-serif;font-size:16px;letter-spacing:0.1px;white-space:pre;color:#2a2a2a">0. 00</div>
<div class="cell" style="left:1130px;top:757px;height:21px;line-height:27px;font-family:'Liberation Sans',sans-serif;font-size:16px;letter-spacing:0.1px;white-space:pre;color:#2a2a2a">0. 00</div>
<div class="cell" style="left:1234px;top:757px;height:21px;line-height:27px;font-family:'Liberation Sans',sans-serif;font-size:16px;letter-spacing:0.1px;white-space:pre;color:#2a2a2a">0. 00</div>
<div class="cell" style="left:90px;top:778px;height:21px;line-height:27px;font-family:'Liberation Sans',sans-serif;font-size:16px;letter-spacing:0.1px;white-space:pre;color:#2a2a2a">111. 21</div>
<div class="cell" style="left:194px;top:778px;height:21px;line-height:27px;font-family:'Liberation Sans',sans-serif;font-size:16px;letter-spacing:0.1px;white-space:pre;color:#2a2a2a">111. 14</div>
<div class="cell" style="left:298px;top:778px;height:21px;line-height:27px;font-family:'Liberation Sans',sans-serif;font-size:16px;letter-spacing:0.1px;white-space:pre;color:#2a2a2a">111. 12</div>
<div class="cell" style="left:402px;top:778px;height:21px;line-height:27px;font-family:'Liberation Sans',sans-serif;font-size:16px;letter-spacing:0.1px;white-space:pre;color:#2a2a2a">111. 26</div>
<div class="cell" style="left:506px;top:778px;height:21px;line-height:27px;font-family:'Liberation Sans',sans-serif;font-size:16px;letter-spacing:0.1px;white-space:pre;color:#2a2a2a">111. 17</div>
<div class="cell" style="left:610px;top:778px;height:21px;line-height:27px;font-family:'Liberation Sans',sans-serif;font-size:16px;letter-spacing:0.1px;white-space:pre;color:#2a2a2a">111. 23</div>
<div class="cell" style="left:714px;top:778px;height:21px;line-height:27px;font-family:'Liberation Sans',sans-serif;font-size:16px;letter-spacing:0.1px;white-space:pre;color:#2a2a2a">0. 00</div>
<div class="cell" style="left:818px;top:778px;height:21px;line-height:27px;font-family:'Liberation Sans',sans-serif;font-size:16px;letter-spacing:0.1px;white-space:pre;color:#2a2a2a">0. 00</div>
<div class="cell" style="left:922px;top:778px;height:21px;line-height:27px;font-family:'Liberation Sans',sans-serif;font-size:16px;letter-spacing:0.1px;white-space:pre;color:#2a2a2a">0. 00</div>
<div class="cell" style="left:1026px;top:778px;height:21px;line-height:27px;font-family:'Liberation Sans',sans-serif;font-size:16px;letter-spacing:0.1px;white-space:pre;color:#2a2a2a">0. 00</div>
<div class="cell" style="left:1130px;top:778px;height:21px;line-height:27px;font-family:'Liberation Sans',sans-serif;font-size:16px;letter-spacing:0.1px;white-space:pre;color:#2a2a2a">0. 00</div>
<div class="cell" style="left:1234px;top:778px;height:21px;line-height:27px;font-family:'Liberation Sans',sans-serif;font-size:16px;letter-spacing:0.1px;white-space:pre;color:#2a2a2a">0. 00</div>
<div class="cell" style="left:90px;top:799px;height:21px;line-height:27px;font-family:'Liberation Sans',sans-serif;font-size:16px;letter-spacing:0.1px;white-space:pre;color:#2a2a2a">112. 08</div>
<div class="cell" style="left:194px;top:799px;height:21px;line-height:27px;font-family:'Liberation Sans',sans-serif;font-size:16px;letter-spacing:0.1px;white-space:pre;color:#2a2a2a">111. 84</div>
<div class="cell" style="left:298px;top:799px;height:21px;line-height:27px;font-family:'Liberation Sans',sans-serif;font-size:16px;letter-spacing:0.1px;white-space:pre;color:#2a2a2a">111. 84</div>
<div class="cell" style="left:402px;top:799px;height:21px;line-height:27px;font-family:'Liberation Sans',sans-serif;font-size:16px;letter-spacing:0.1px;white-space:pre;color:#2a2a2a">112. 01</div>
<div class="cell" style="left:506px;top:799px;height:21px;line-height:27px;font-family:'Liberation Sans',sans-serif;font-size:16px;letter-spacing:0.1px;white-space:pre;color:#2a2a2a">111. 95</div>
<div class="cell" style="left:610px;top:799px;height:21px;line-height:27px;font-family:'Liberation Sans',sans-serif;font-size:16px;letter-spacing:0.1px;white-space:pre;color:#2a2a2a">112. 01</div>
<div class="cell" style="left:714px;top:799px;height:21px;line-height:27px;font-family:'Liberation Sans',sans-serif;font-size:16px;letter-spacing:0.1px;white-space:pre;color:#2a2a2a">0. 00</div>
<div class="cell" style="left:818px;top:799px;height:21px;line-height:27px;font-family:'Liberation Sans',sans-serif;font-size:16px;letter-spacing:0.1px;white-space:pre;color:#2a2a2a">0. 00</div>
<div class="cell" style="left:922px;top:799px;height:21px;line-height:27px;font-family:'Liberation Sans',sans-serif;font-size:16px;letter-spacing:0.1px;white-space:pre;color:#2a2a2a">0. 00</div>
<div class="cell" style="left:1026px;top:799px;height:21px;line-height:27px;font-family:'Liberation Sans',sans-serif;font-size:16px;letter-spacing:0.1px;white-space:pre;color:#2a2a2a">0. 00</div>
<div class="cell" style="left:1130px;top:799px;height:21px;line-height:27px;font-family:'Liberation Sans',sans-serif;font-size:16px;letter-spacing:0.1px;white-space:pre;color:#2a2a2a">0. 00</div>
<div class="cell" style="left:1234px;top:799px;height:21px;line-height:27px;font-family:'Liberation Sans',sans-serif;font-size:16px;letter-spacing:0.1px;white-space:pre;color:#2a2a2a">0. 00</div>
<div class="cell" style="left:90px;top:820px;height:21px;line-height:27px;font-family:'Liberation Sans',sans-serif;font-size:16px;letter-spacing:0.1px;white-space:pre;color:#2a2a2a">112. 61</div>
<div class="cell" style="left:194px;top:820px;height:21px;line-height:27px;font-family:'Liberation Sans',sans-serif;font-size:16px;letter-spacing:0.1px;white-space:pre;color:#2a2a2a">112. 61</div>
<div class="cell" style="left:298px;top:820px;height:21px;line-height:27px;font-family:'Liberation Sans',sans-serif;font-size:16px;letter-spacing:0.1px;white-space:pre;color:#2a2a2a">112. 55</div>
<div class="cell" style="left:402px;top:820px;height:21px;line-height:27px;font-family:'Liberation Sans',sans-serif;font-size:16px;letter-spacing:0.1px;white-space:pre;color:#2a2a2a">112. 67</div>
<div class="cell" style="left:506px;top:820px;height:21px;line-height:27px;font-family:'Liberation Sans',sans-serif;font-size:16px;letter-spacing:0.1px;white-space:pre;color:#2a2a2a">112. 73</div>
<div class="cell" style="left:610px;top:820px;height:21px;line-height:27px;font-family:'Liberation Sans',sans-serif;font-size:16px;letter-spacing:0.1px;white-space:pre;color:#2a2a2a">112. 64</div>
<div class="cell" style="left:714px;top:820px;height:21px;line-height:27px;font-family:'Liberation Sans',sans-serif;font-size:16px;letter-spacing:0.1px;white-space:pre;color:#2a2a2a">0. 00</div>
<div class="cell" style="left:818px;top:820px;height:21px;line-height:27px;font-family:'Liberation Sans',sans-serif;font-size:16px;letter-spacing:0.1px;white-space:pre;color:#2a2a2a">0. 00</div>
<div class="cell" style="left:922px;top:820px;height:21px;line-height:27px;font-family:'Liberation Sans',sans-serif;font-size:16px;letter-spacing:0.1px;white-space:pre;color:#2a2a2a">0. 00</div>
<div class="cell" style="left:1026px;top:820px;height:21px;line-height:27px;font-family:'Liberation Sans',sans-serif;font-size:16px;letter-spacing:0.1px;white-space:pre;color:#2a2a2a">0. 00</div>
<div class="cell" style="left:1130px;top:820px;height:21px;line-height:27px;font-family:'Liberation Sans',sans-serif;font-size:16px;letter-spacing:0.1px;white-space:pre;color:#2a2a2a">0. 00</div>
<div class="cell" style="left:1234px;top:820px;height:21px;line-height:27px;font-family:'Liberation Sans',sans-serif;font-size:16px;letter-spacing:0.1px;white-space:pre;color:#2a2a2a">0. 00</div>
<div class="cell" style="left:90px;top:841px;height:21px;line-height:27px;font-family:'Liberation Sans',sans-serif;font-size:16px;letter-spacing:0.1px;white-space:pre;color:#2a2a2a">113. 27</div>
<div class="cell" style="left:194px;top:841px;height:21px;line-height:27px;font-family:'Liberation Sans',sans-serif;font-size:16px;letter-spacing:0.1px;white-space:pre;color:#2a2a2a">113. 27</div>
<div class="cell" style="left:298px;top:841px;height:21px;line-height:27px;font-family:'Liberation Sans',sans-serif;font-size:16px;letter-spacing:0.1px;white-space:pre;color:#2a2a2a">113. 22</div>
<div class="cell" style="left:402px;top:841px;height:21px;line-height:27px;font-family:'Liberation Sans',sans-serif;font-size:16px;letter-spacing:0.1px;white-space:pre;color:#2a2a2a">113. 33</div>
<div class="cell" style="left:506px;top:841px;height:21px;line-height:27px;font-family:'Liberation Sans',sans-serif;font-size:16px;letter-spacing:0.1px;white-space:pre;color:#2a2a2a">113. 28</div>
<div class="cell" style="left:610px;top:841px;height:21px;line-height:27px;font-family:'Liberation Sans',sans-serif;font-size:16px;letter-spacing:0.1px;white-space:pre;color:#2a2a2a">113. 33</div>
<div class="cell" style="left:714px;top:841px;height:21px;line-height:27px;font-family:'Liberation Sans',sans-serif;font-size:16px;letter-spacing:0.1px;white-space:pre;color:#2a2a2a">0. 00</div>
<div class="cell" style="left:818px;top:841px;height:21px;line-height:27px;font-family:'Liberation Sans',sans-serif;font-size:16px;letter-spacing:0.1px;white-space:pre;color:#2a2a2a">0. 00</div>
<div class="cell" style="left:922px;top:841px;height:21px;line-height:27px;font-family:'Liberation Sans',sans-serif;font-size:16px;letter-spacing:0.1px;white-space:pre;color:#2a2a2a">0. 00</div>
<div class="cell" style="left:1026px;top:841px;height:21px;line-height:27px;font-family:'Liberation Sans',sans-serif;font-size:16px;letter-spacing:0.1px;white-space:pre;color:#2a2a2a">0. 00</div>
<div class="cell" style="left:1130px;top:841px;height:21px;line-height:27px;font-family:'Liberation Sans',sans-serif;font-size:16px;letter-spacing:0.1px;white-space:pre;color:#2a2a2a">0. 00</div>
<div class="cell" style="left:1234px;top:841px;height:21px;line-height:27px;font-family:'Liberation Sans',sans-serif;font-size:16px;letter-spacing:0.1px;white-space:pre;color:#2a2a2a">0. 00</div>
<div class="cell" style="left:90px;top:862px;height:21px;line-height:27px;font-family:'Liberation Sans',sans-serif;font-size:16px;letter-spacing:0.1px;white-space:pre;color:#2a2a2a">113. 97</div>
<div class="cell" style="left:194px;top:862px;height:21px;line-height:27px;font-family:'Liberation Sans',sans-serif;font-size:16px;letter-spacing:0.1px;white-space:pre;color:#2a2a2a">113. 88</div>
<div class="cell" style="left:298px;top:862px;height:21px;line-height:27px;font-family:'Liberation Sans',sans-serif;font-size:16px;letter-spacing:0.1px;white-space:pre;color:#2a2a2a">113. 87</div>
<div class="cell" style="left:402px;top:862px;height:21px;line-height:27px;font-family:'Liberation Sans',sans-serif;font-size:16px;letter-spacing:0.1px;white-space:pre;color:#2a2a2a">113. 99</div>
<div class="cell" style="left:506px;top:862px;height:21px;line-height:27px;font-family:'Liberation Sans',sans-serif;font-size:16px;letter-spacing:0.1px;white-space:pre;color:#2a2a2a">113. 93</div>
<div class="cell" style="left:610px;top:862px;height:21px;line-height:27px;font-family:'Liberation Sans',sans-serif;font-size:16px;letter-spacing:0.1px;white-space:pre;color:#2a2a2a">113. 97</div>
<div class="cell" style="left:714px;top:862px;height:21px;line-height:27px;font-family:'Liberation Sans',sans-serif;font-size:16px;letter-spacing:0.1px;white-space:pre;color:#2a2a2a">0. 00</div>
<div class="cell" style="left:818px;top:862px;height:21px;line-height:27px;font-family:'Liberation Sans',sans-serif;font-size:16px;letter-spacing:0.1px;white-space:pre;color:#2a2a2a">0. 00</div>
<div class="cell" style="left:922px;top:862px;height:21px;line-height:27px;font-family:'Liberation Sans',sans-serif;font-size:16px;letter-spacing:0.1px;white-space:pre;color:#2a2a2a">0. 00</div>
<div class="cell" style="left:1026px;top:862px;height:21px;line-height:27px;font-family:'Liberation Sans',sans-serif;font-size:16px;letter-spacing:0.1px;white-space:pre;color:#2a2a2a">0. 00</div>
<div class="cell" style="left:1130px;top:862px;height:21px;line-height:27px;font-family:'Liberation Sans',sans-serif;font-size:16px;letter-spacing:0.1px;white-space:pre;color:#2a2a2a">0. 00</div>
<div class="cell" style="left:1234px;top:862px;height:21px;line-height:27px;font-family:'Liberation Sans',sans-serif;font-size:16px;letter-spacing:0.1px;white-space:pre;color:#2a2a2a">0. 00</div>
<div class="cell" style="left:90px;top:883px;height:21px;line-height:27px;font-family:'Liberation Sans',sans-serif;font-size:16px;letter-spacing:0.1px;white-space:pre;color:#2a2a2a">114. 65</div>
<div class="cell" style="left:194px;top:883px;height:21px;line-height:27px;font-family:'Liberation Sans',sans-serif;font-size:16px;letter-spacing:0.1px;white-space:pre;color:#2a2a2a">114. 53</div>
<div class="cell" style="left:298px;top:883px;height:21px;line-height:27px;font-family:'Liberation Sans',sans-serif;font-size:16px;letter-spacing:0.1px;white-space:pre;color:#2a2a2a">114. 54</div>
<div class="cell" style="left:402px;top:883px;height:21px;line-height:27px;font-family:'Liberation Sans',sans-serif;font-size:16px;letter-spacing:0.1px;white-space:pre;color:#2a2a2a">114. 63</div>
<div class="cell" style="left:506px;top:883px;height:21px;line-height:27px;font-family:'Liberation Sans',sans-serif;font-size:16px;letter-spacing:0.1px;white-space:pre;color:#2a2a2a">114. 53</div>
<div class="cell" style="left:610px;top:883px;height:21px;line-height:27px;font-family:'Liberation Sans',sans-serif;font-size:16px;letter-spacing:0.1px;white-space:pre;color:#2a2a2a">114. 69</div>
<div class="cell" style="left:714px;top:883px;height:21px;line-height:27px;font-family:'Liberation Sans',sans-serif;font-size:16px;letter-spacing:0.1px;white-space:pre;color:#2a2a2a">0. 00</div>
<div class="cell" style="left:818px;top:883px;height:21px;line-height:27px;font-family:'Liberation Sans',sans-serif;font-size:16px;letter-spacing:0.1px;white-space:pre;color:#2a2a2a">0. 00</div>
<div class="cell" style="left:922px;top:883px;height:21px;line-height:27px;font-family:'Liberation Sans',sans-serif;font-size:16px;letter-spacing:0.1px;white-space:pre;color:#2a2a2a">0. 00</div>
<div class="cell" style="left:1026px;top:883px;height:21px;line-height:27px;font-family:'Liberation Sans',sans-serif;font-size:16px;letter-spacing:0.1px;white-space:pre;color:#2a2a2a">0. 00</div>
<div class="cell" style="left:1130px;top:883px;height:21px;line-height:27px;font-family:'Liberation Sans',sans-serif;font-size:16px;letter-spacing:0.1px;white-space:pre;color:#2a2a2a">0. 00</div>
<div class="cell" style="left:1234px;top:883px;height:21px;line-height:27px;font-family:'Liberation Sans',sans-serif;font-size:16px;letter-spacing:0.1px;white-space:pre;color:#2a2a2a">0. 00</div>
<div class="cell" style="left:90px;top:904px;height:21px;line-height:27px;font-family:'Liberation Sans',sans-serif;font-size:16px;letter-spacing:0.1px;white-space:pre;color:#2a2a2a">115. 19</div>
<div class="cell" style="left:194px;top:904px;height:21px;line-height:27px;font-family:'Liberation Sans',sans-serif;font-size:16px;letter-spacing:0.1px;white-space:pre;color:#2a2a2a">115. 14</div>
<div class="cell" style="left:298px;top:904px;height:21px;line-height:27px;font-family:'Liberation Sans',sans-serif;font-size:16px;letter-spacing:0.1px;white-space:pre;color:#2a2a2a">115. 13</div>
<div class="cell" style="left:402px;top:904px;height:21px;line-height:27px;font-family:'Liberation Sans',sans-serif;font-size:16px;letter-spacing:0.1px;white-space:pre;color:#2a2a2a">115. 23</div>
<div class="cell" style="left:506px;top:904px;height:21px;line-height:27px;font-family:'Liberation Sans',sans-serif;font-size:16px;letter-spacing:0.1px;white-space:pre;color:#2a2a2a">115. 11</div>
<div class="cell" style="left:610px;top:904px;height:21px;line-height:27px;font-family:'Liberation Sans',sans-serif;font-size:16px;letter-spacing:0.1px;white-space:pre;color:#2a2a2a">115. 22</div>
<div class="cell" style="left:714px;top:904px;height:21px;line-height:27px;font-family:'Liberation Sans',sans-serif;font-size:16px;letter-spacing:0.1px;white-space:pre;color:#2a2a2a">0. 00</div>
<div class="cell" style="left:818px;top:904px;height:21px;line-height:27px;font-family:'Liberation Sans',sans-serif;font-size:16px;letter-spacing:0.1px;white-space:pre;color:#2a2a2a">0. 00</div>
<div class="cell" style="left:922px;top:904px;height:21px;line-height:27px;font-family:'Liberation Sans',sans-serif;font-size:16px;letter-spacing:0.1px;white-space:pre;color:#2a2a2a">0. 00</div>
<div class="cell" style="left:1026px;top:904px;height:21px;line-height:27px;font-family:'Liberation Sans',sans-serif;font-size:16px;letter-spacing:0.1px;white-space:pre;color:#2a2a2a">0. 00</div>
<div class="cell" style="left:1130px;top:904px;height:21px;line-height:27px;font-family:'Liberation Sans',sans-serif;font-size:16px;letter-spacing:0.1px;white-space:pre;color:#2a2a2a">0. 00</div>
<div class="cell" style="left:1234px;top:904px;height:21px;line-height:27px;font-family:'Liberation Sans',sans-serif;font-size:16px;letter-spacing:0.1px;white-space:pre;color:#2a2a2a">0. 00</div>
<div class="cell" style="left:90px;top:925px;height:18px;line-height:24px;font-family:'Liberation Sans',sans-serif;font-size:16px;letter-spacing:0.1px;white-space:pre;color:#2a2a2a">115. 80</div>
<div class="cell" style="left:194px;top:925px;height:18px;line-height:24px;font-family:'Liberation Sans',sans-serif;font-size:16px;letter-spacing:0.1px;white-space:pre;color:#2a2a2a">115. 74</div>
<div class="cell" style="left:298px;top:925px;height:18px;line-height:24px;font-family:'Liberation Sans',sans-serif;font-size:16px;letter-spacing:0.1px;white-space:pre;color:#2a2a2a">115. 73</div>
<div class="cell" style="left:402px;top:925px;height:18px;line-height:24px;font-family:'Liberation Sans',sans-serif;font-size:16px;letter-spacing:0.1px;white-space:pre;color:#2a2a2a">115. 85</div>
<div class="cell" style="left:506px;top:925px;height:18px;line-height:24px;font-family:'Liberation Sans',sans-serif;font-size:16px;letter-spacing:0.1px;white-space:pre;color:#2a2a2a">115. 76</div>
<div class="cell" style="left:610px;top:925px;height:18px;line-height:24px;font-family:'Liberation Sans',sans-serif;font-size:16px;letter-spacing:0.1px;white-space:pre;color:#2a2a2a">115. 83</div>
<div class="cell" style="left:714px;top:925px;height:18px;line-height:24px;font-family:'Liberation Sans',sans-serif;font-size:16px;letter-spacing:0.1px;white-space:pre;color:#2a2a2a">0. 00</div>
<div class="cell" style="left:818px;top:925px;height:18px;line-height:24px;font-family:'Liberation Sans',sans-serif;font-size:16px;letter-spacing:0.1px;white-space:pre;color:#2a2a2a">0. 00</div>
<div class="cell" style="left:922px;top:925px;height:18px;line-height:24px;font-family:'Liberation Sans',sans-serif;font-size:16px;letter-spacing:0.1px;white-space:pre;color:#2a2a2a">0. 00</div>
<div class="cell" style="left:1026px;top:925px;height:18px;line-height:24px;font-family:'Liberation Sans',sans-serif;font-size:16px;letter-spacing:0.1px;white-space:pre;color:#2a2a2a">0. 00</div>
<div class="cell" style="left:1130px;top:925px;height:18px;line-height:24px;font-family:'Liberation Sans',sans-serif;font-size:16px;letter-spacing:0.1px;white-space:pre;color:#2a2a2a">0. 00</div>
<div class="cell" style="left:1234px;top:925px;height:18px;line-height:24px;font-family:'Liberation Sans',sans-serif;font-size:16px;letter-spacing:0.1px;white-space:pre;color:#2a2a2a">0. 00</div>
<div class="cell" style="left:90px;top:943px;height:18px;line-height:24px;font-family:'Liberation Sans',sans-serif;font-size:16px;letter-spacing:0.1px;white-space:pre;color:#2a2a2a">116. 34</div>
<div class="cell" style="left:194px;top:943px;height:18px;line-height:24px;font-family:'Liberation Sans',sans-serif;font-size:16px;letter-spacing:0.1px;white-space:pre;color:#2a2a2a">116. 31</div>
<div class="cell" style="left:298px;top:943px;height:18px;line-height:24px;font-family:'Liberation Sans',sans-serif;font-size:16px;letter-spacing:0.1px;white-space:pre;color:#2a2a2a">116. 31</div>
<div class="cell" style="left:402px;top:943px;height:18px;line-height:24px;font-family:'Liberation Sans',sans-serif;font-size:16px;letter-spacing:0.1px;white-space:pre;color:#2a2a2a">116. 33</div>
<div class="cell" style="left:506px;top:943px;height:18px;line-height:24px;font-family:'Liberation Sans',sans-serif;font-size:16px;letter-spacing:0.1px;white-space:pre;color:#2a2a2a">116. 33</div>
<div class="cell" style="left:610px;top:943px;height:18px;line-height:24px;font-family:'Liberation Sans',sans-serif;font-size:16px;letter-spacing:0.1px;white-space:pre;color:#2a2a2a">116. 36</div>
<div class="cell" style="left:714px;top:943px;height:18px;line-height:24px;font-family:'Liberation Sans',sans-serif;font-size:16px;letter-spacing:0.1px;white-space:pre;color:#2a2a2a">0. 00</div>
<div class="cell" style="left:818px;top:943px;height:18px;line-height:24px;font-family:'Liberation Sans',sans-serif;font-size:16px;letter-spacing:0.1px;white-space:pre;color:#2a2a2a">0. 00</div>
<div class="cell" style="left:922px;top:943px;height:18px;line-height:24px;font-family:'Liberation Sans',sans-serif;font-size:16px;letter-spacing:0.1px;white-space:pre;color:#2a2a2a">0. 00</div>
<div class="cell" style="left:1026px;top:943px;height:18px;line-height:24px;font-family:'Liberation Sans',sans-serif;font-size:16px;letter-spacing:0.1px;white-space:pre;color:#2a2a2a">0. 00</div>
<div class="cell" style="left:1130px;top:943px;height:18px;line-height:24px;font-family:'Liberation Sans',sans-serif;font-size:16px;letter-spacing:0.1px;white-space:pre;color:#2a2a2a">0. 00</div>
<div class="cell" style="left:1234px;top:943px;height:18px;line-height:24px;font-family:'Liberation Sans',sans-serif;font-size:16px;letter-spacing:0.1px;white-space:pre;color:#2a2a2a">0. 00</div>
<div class="cell" style="left:90px;top:961px;height:18px;line-height:24px;font-family:'Liberation Sans',sans-serif;font-size:16px;letter-spacing:0.1px;white-space:pre;color:#2a2a2a">116. 90</div>
<div class="cell" style="left:194px;top:961px;height:18px;line-height:24px;font-family:'Liberation Sans',sans-serif;font-size:16px;letter-spacing:0.1px;white-space:pre;color:#2a2a2a">116. 84</div>
<div class="cell" style="left:298px;top:961px;height:18px;line-height:24px;font-family:'Liberation Sans',sans-serif;font-size:16px;letter-spacing:0.1px;white-space:pre;color:#2a2a2a">116. 87</div>
<div class="cell" style="left:402px;top:961px;height:18px;line-height:24px;font-family:'Liberation Sans',sans-serif;font-size:16px;letter-spacing:0.1px;white-space:pre;color:#2a2a2a">116. 93</div>
<div class="cell" style="left:506px;top:961px;height:18px;line-height:24px;font-family:'Liberation Sans',sans-serif;font-size:16px;letter-spacing:0.1px;white-space:pre;color:#2a2a2a">116. 91</div>
<div class="cell" style="left:610px;top:961px;height:18px;line-height:24px;font-family:'Liberation Sans',sans-serif;font-size:16px;letter-spacing:0.1px;white-space:pre;color:#2a2a2a">116. 94</div>
<div class="cell" style="left:714px;top:961px;height:18px;line-height:24px;font-family:'Liberation Sans',sans-serif;font-size:16px;letter-spacing:0.1px;white-space:pre;color:#2a2a2a">0. 00</div>
<div class="cell" style="left:818px;top:961px;height:18px;line-height:24px;font-family:'Liberation Sans',sans-serif;font-size:16px;letter-spacing:0.1px;white-space:pre;color:#2a2a2a">0. 00</div>
<div class="cell" style="left:922px;top:961px;height:18px;line-height:24px;font-family:'Liberation Sans',sans-serif;font-size:16px;letter-spacing:0.1px;white-space:pre;color:#2a2a2a">0. 00</div>
<div class="cell" style="left:1026px;top:961px;height:18px;line-height:24px;font-family:'Liberation Sans',sans-serif;font-size:16px;letter-spacing:0.1px;white-space:pre;color:#2a2a2a">0. 00</div>
<div class="cell" style="left:1130px;top:961px;height:18px;line-height:24px;font-family:'Liberation Sans',sans-serif;font-size:16px;letter-spacing:0.1px;white-space:pre;color:#2a2a2a">0. 00</div>
<div class="cell" style="left:1234px;top:961px;height:18px;line-height:24px;font-family:'Liberation Sans',sans-serif;font-size:16px;letter-spacing:0.1px;white-space:pre;color:#2a2a2a">0. 00</div>
<div class="cell" style="left:90px;top:979px;height:18px;line-height:24px;font-family:'Liberation Sans',sans-serif;font-size:16px;letter-spacing:0.1px;white-space:pre;color:#2a2a2a">117. 44</div>
<div class="cell" style="left:194px;top:979px;height:18px;line-height:24px;font-family:'Liberation Sans',sans-serif;font-size:16px;letter-spacing:0.1px;white-space:pre;color:#2a2a2a">117. 41</div>
<div class="cell" style="left:298px;top:979px;height:18px;line-height:24px;font-family:'Liberation Sans',sans-serif;font-size:16px;letter-spacing:0.1px;white-space:pre;color:#2a2a2a">117. 45</div>
<div class="cell" style="left:402px;top:979px;height:18px;line-height:24px;font-family:'Liberation Sans',sans-serif;font-size:16px;letter-spacing:0.1px;white-space:pre;color:#2a2a2a">117. 44</div>
<div class="cell" style="left:506px;top:979px;height:18px;line-height:24px;font-family:'Liberation Sans',sans-serif;font-size:16px;letter-spacing:0.1px;white-space:pre;color:#2a2a2a">117. 42</div>
<div class="cell" style="left:610px;top:979px;height:18px;line-height:24px;font-family:'Liberation Sans',sans-serif;font-size:16px;letter-spacing:0.1px;white-space:pre;color:#2a2a2a">117. 47</div>
<div class="cell" style="left:714px;top:979px;height:18px;line-height:24px;font-family:'Liberation Sans',sans-serif;font-size:16px;letter-spacing:0.1px;white-space:pre;color:#2a2a2a">0. 00</div>
<div class="cell" style="left:818px;top:979px;height:18px;line-height:24px;font-family:'Liberation Sans',sans-serif;font-size:16px;letter-spacing:0.1px;white-space:pre;color:#2a2a2a">0. 00</div>
<div class="cell" style="left:922px;top:979px;height:18px;line-height:24px;font-family:'Liberation Sans',sans-serif;font-size:16px;letter-spacing:0.1px;white-space:pre;color:#2a2a2a">0. 00</div>
<div class="cell" style="left:1026px;top:979px;height:18px;line-height:24px;font-family:'Liberation Sans',sans-serif;font-size:16px;letter-spacing:0.1px;white-space:pre;color:#2a2a2a">0. 00</div>
<div class="cell" style="left:1130px;top:979px;height:18px;line-height:24px;font-family:'Liberation Sans',sans-serif;font-size:16px;letter-spacing:0.1px;white-space:pre;color:#2a2a2a">0. 00</div>
<div class="cell" style="left:1234px;top:979px;height:18px;line-height:24px;font-family:'Liberation Sans',sans-serif;font-size:16px;letter-spacing:0.1px;white-space:pre;color:#2a2a2a">0. 00</div>
<div class="cell" style="left:90px;top:997px;height:18px;line-height:24px;font-family:'Liberation Sans',sans-serif;font-size:16px;letter-spacing:0.1px;white-space:pre;color:#2a2a2a">118. 05</div>
<div class="cell" style="left:194px;top:997px;height:18px;line-height:24px;font-family:'Liberation Sans',sans-serif;font-size:16px;letter-spacing:0.1px;white-space:pre;color:#2a2a2a">118. 05</div>
<div class="cell" style="left:298px;top:997px;height:18px;line-height:24px;font-family:'Liberation Sans',sans-serif;font-size:16px;letter-spacing:0.1px;white-space:pre;color:#2a2a2a">118. 02</div>
<div class="cell" style="left:402px;top:997px;height:18px;line-height:24px;font-family:'Liberation Sans',sans-serif;font-size:16px;letter-spacing:0.1px;white-space:pre;color:#2a2a2a">118. 08</div>
<div class="cell" style="left:506px;top:997px;height:18px;line-height:24px;font-family:'Liberation Sans',sans-serif;font-size:16px;letter-spacing:0.1px;white-space:pre;color:#2a2a2a">117. 99</div>
<div class="cell" style="left:610px;top:997px;height:18px;line-height:24px;font-family:'Liberation Sans',sans-serif;font-size:16px;letter-spacing:0.1px;white-space:pre;color:#2a2a2a">118. 05</div>
<div class="cell" style="left:714px;top:997px;height:18px;line-height:24px;font-family:'Liberation Sans',sans-serif;font-size:16px;letter-spacing:0.1px;white-space:pre;color:#2a2a2a">0. 00</div>
<div class="cell" style="left:818px;top:997px;height:18px;line-height:24px;font-family:'Liberation Sans',sans-serif;font-size:16px;letter-spacing:0.1px;white-space:pre;color:#2a2a2a">0. 00</div>
<div class="cell" style="left:922px;top:997px;height:18px;line-height:24px;font-family:'Liberation Sans',sans-serif;font-size:16px;letter-spacing:0.1px;white-space:pre;color:#2a2a2a">0. 00</div>
<div class="cell" style="left:1026px;top:997px;height:18px;line-height:24px;font-family:'Liberation Sans',sans-serif;font-size:16px;letter-spacing:0.1px;white-space:pre;color:#2a2a2a">0. 00</div>
<div class="cell" style="left:1130px;top:997px;height:18px;line-height:24px;font-family:'Liberation Sans',sans-serif;font-size:16px;letter-spacing:0.1px;white-space:pre;color:#2a2a2a">0. 00</div>
<div class="cell" style="left:1234px;top:997px;height:18px;line-height:24px;font-family:'Liberation Sans',sans-serif;font-size:16px;letter-spacing:0.1px;white-space:pre;color:#2a2a2a">0. 00</div>
<div class="cell" style="left:90px;top:1015px;height:18px;line-height:24px;font-family:'Liberation Sans',sans-serif;font-size:16px;letter-spacing:0.1px;white-space:pre;color:#2a2a2a">118. 58</div>
<div class="cell" style="left:194px;top:1015px;height:18px;line-height:24px;font-family:'Liberation Sans',sans-serif;font-size:16px;letter-spacing:0.1px;white-space:pre;color:#2a2a2a">118. 43</div>
<div class="cell" style="left:298px;top:1015px;height:18px;line-height:24px;font-family:'Liberation Sans',sans-serif;font-size:16px;letter-spacing:0.1px;white-space:pre;color:#2a2a2a">118. 49</div>
<div class="cell" style="left:402px;top:1015px;height:18px;line-height:24px;font-family:'Liberation Sans',sans-serif;font-size:16px;letter-spacing:0.1px;white-space:pre;color:#2a2a2a">118. 55</div>
<div class="cell" style="left:506px;top:1015px;height:18px;line-height:24px;font-family:'Liberation Sans',sans-serif;font-size:16px;letter-spacing:0.1px;white-space:pre;color:#2a2a2a">118. 55</div>
<div class="cell" style="left:610px;top:1015px;height:18px;line-height:24px;font-family:'Liberation Sans',sans-serif;font-size:16px;letter-spacing:0.1px;white-space:pre;color:#2a2a2a">118. 64</div>
<div class="cell" style="left:714px;top:1015px;height:18px;line-height:24px;font-family:'Liberation Sans',sans-serif;font-size:16px;letter-spacing:0.1px;white-space:pre;color:#2a2a2a">0. 00</div>
<div class="cell" style="left:818px;top:1015px;height:18px;line-height:24px;font-family:'Liberation Sans',sans-serif;font-size:16px;letter-spacing:0.1px;white-space:pre;color:#2a2a2a">0. 00</div>
<div class="cell" style="left:922px;top:1015px;height:18px;line-height:24px;font-family:'Liberation Sans',sans-serif;font-size:16px;letter-spacing:0.1px;white-space:pre;color:#2a2a2a">0. 00</div>
<div class="cell" style="left:1026px;top:1015px;height:18px;line-height:24px;font-family:'Liberation Sans',sans-serif;font-size:16px;letter-spacing:0.1px;white-space:pre;color:#2a2a2a">0. 00</div>
<div class="cell" style="left:1130px;top:1015px;height:18px;line-height:24px;font-family:'Liberation Sans',sans-serif;font-size:16px;letter-spacing:0.1px;white-space:pre;color:#2a2a2a">0. 00</div>
<div class="cell" style="left:1234px;top:1015px;height:18px;line-height:24px;font-family:'Liberation Sans',sans-serif;font-size:16px;letter-spacing:0.1px;white-space:pre;color:#2a2a2a">0. 00</div>
</body></html>
